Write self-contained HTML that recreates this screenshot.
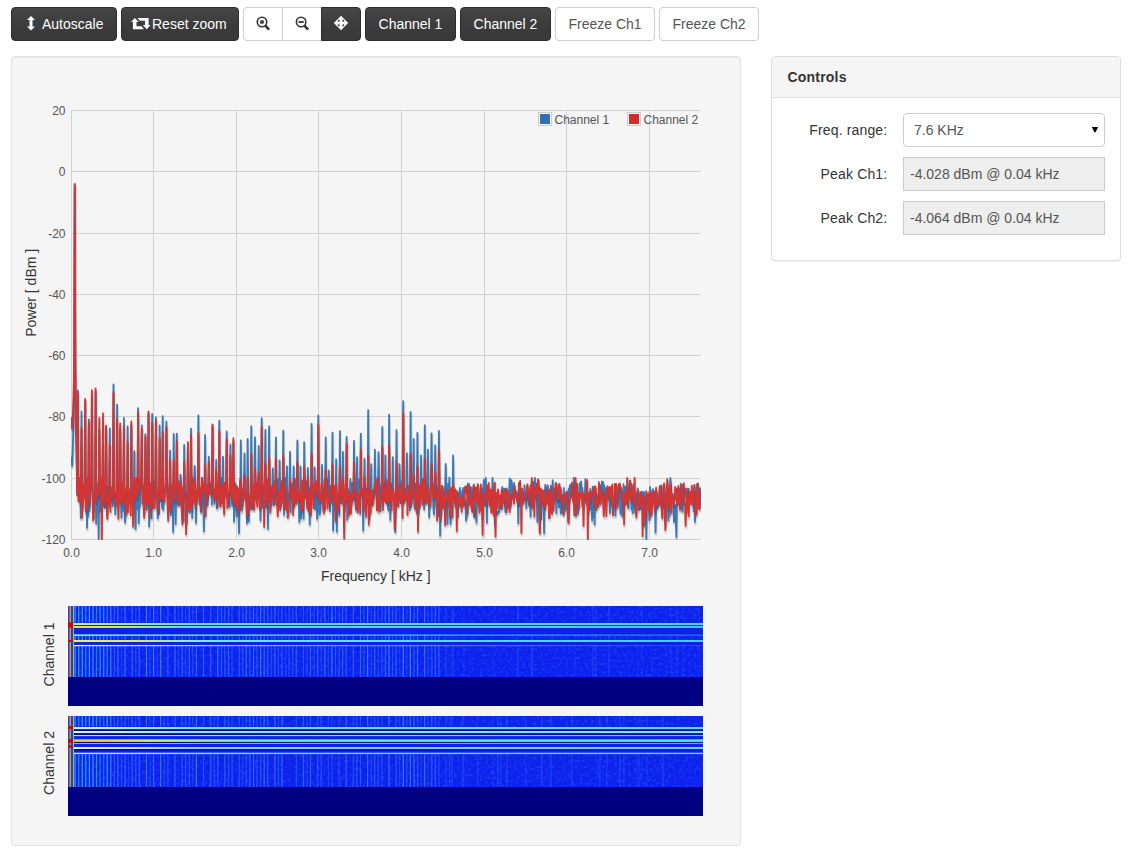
<!DOCTYPE html>
<html><head><meta charset="utf-8">
<style>
*{box-sizing:border-box;margin:0;padding:0}
html,body{width:1135px;height:852px;overflow:hidden;background:#fff}
body{font-family:"Liberation Sans",sans-serif;font-size:14px;color:#333;position:relative}
.btn{position:absolute;top:7px;height:34px;border:1px solid #ccc;border-radius:4px;background:#fff;color:#333;line-height:32px;text-align:center;white-space:nowrap}
.btn.dark{background:linear-gradient(to bottom,#464646 0%,#3c3c3c 50%,#393939 100%);border-color:#2c2c2c;color:#fff}
.btn.light{color:#555}
.well{position:absolute;left:11px;top:56px;width:730px;height:790px;background:#f5f5f5;border:1px solid #e1e1e1;border-radius:4px;box-shadow:inset 0 1px 1px rgba(0,0,0,.05)}
.panel{position:absolute;left:771px;top:56px;width:350px;height:205px;border:1px solid #ddd;border-radius:4px;background:#fff;box-shadow:0 1px 1px rgba(0,0,0,.05)}
.ph{height:41px;background:#f5f5f5;border-bottom:1px solid #ddd;border-radius:3px 3px 0 0;padding:10px 15px;font-weight:bold;line-height:20px;letter-spacing:0.2px;padding-left:15.5px}
.lab{position:absolute;right:232.7px;letter-spacing:0.15px;font-size:14px;color:#333;line-height:20px;text-align:right;white-space:nowrap}
.inp{position:absolute;left:131px;width:202px;height:34px;border:1px solid #ccc;background:#eee;color:#555;line-height:32px;padding-left:6px;white-space:nowrap}
.sel{background:#fff;border-radius:4px;padding-left:10px}
svg{position:absolute;left:0;top:0}
</style></head><body>

<div class="btn dark" style="left:11px;width:106px"><svg width="8" height="15" viewBox="0 0 8 15" style="position:absolute;left:15.2px;top:8px"><path d="M4 0 L8 4 L5.5 4 L5.5 10.5 L8 10.5 L4 14.5 L0 10.5 L2.5 10.5 L2.5 4 L0 4 Z" fill="#fff"/></svg><span style="position:absolute;left:30px;top:0">Autoscale</span></div>
<div class="btn dark" style="left:121px;width:118px"><svg width="20" height="12" viewBox="0 0 20 12" style="position:absolute;left:9px;top:10px"><path d="M3.8 0 L7.8 4 L5.5 4 L5.5 8.3 L10.5 8.3 L13 11.2 L1.9 11.2 L1.9 4 L0 4 Z" fill="#fff"/><path d="M6.5 0 L17.6 0 L17.6 7 L19.6 7 L15.8 11.2 L11.8 7 L14 7 L14 2.8 L9 2.8 Z" fill="#fff"/></svg><span style="position:absolute;left:30px;top:0">Reset zoom</span></div>
<div class="btn" style="left:243px;width:40px;border-radius:4px 0 0 4px"><svg width="20" height="20" viewBox="0 0 20 20" style="position:absolute;left:8px;top:5px"><circle cx="10.0" cy="9.0" r="4.7" fill="none" stroke="#333" stroke-width="1.6"/><circle cx="10.0" cy="9.0" r="2.1" fill="#444"/><path d="M13.4 12.6 L17.0 16.6" stroke="#333" stroke-width="2.5"/></svg></div>
<div class="btn" style="left:282px;width:40px;border-radius:0;border-right:none"><svg width="20" height="20" viewBox="0 0 20 20" style="position:absolute;left:8px;top:5px"><circle cx="10.1" cy="9.0" r="4.7" fill="none" stroke="#333" stroke-width="1.6"/><rect x="7.5" y="8.1" width="5.2" height="1.8" fill="#333"/><path d="M13.5 12.6 L17.1 16.6" stroke="#333" stroke-width="2.5"/></svg></div>
<div class="btn dark" style="left:321px;width:40px;border-radius:0 4px 4px 0"><svg width="16" height="16" viewBox="0 0 16 16" style="position:absolute;left:10.7px;top:7.3px"><path d="M8 0.8 L15.2 8 L8 15.2 L0.8 8 Z" fill="#fff"/><rect x="4.8" y="4.8" width="1.8" height="1.8" fill="#3a3a3a"/><rect x="9.4" y="4.8" width="1.8" height="1.8" fill="#3a3a3a"/><rect x="4.8" y="9.4" width="1.8" height="1.8" fill="#3a3a3a"/><rect x="9.4" y="9.4" width="1.8" height="1.8" fill="#3a3a3a"/></svg></div>
<div class="btn dark" style="left:365px;width:91px">Channel 1</div>
<div class="btn dark" style="left:460px;width:91px">Channel 2</div>
<div class="btn light" style="left:555px;width:100px">Freeze Ch1</div>
<div class="btn light" style="left:659px;width:100px">Freeze Ch2</div>
<div class="well"></div>
<div class="panel"><div class="ph">Controls</div>
<div class="lab" style="top:63px">Freq. range:</div>
<div class="inp sel" style="top:56px">7.6 KHz<svg width="8" height="8" viewBox="0 0 8 8" style="position:absolute;left:187px;top:12px"><path d="M0.8 1 L7.2 1 L4.6 6.3 L3.4 6.3 Z" fill="#000"/></svg></div>
<div class="lab" style="top:107px">Peak Ch1:</div>
<div class="inp" style="top:100px">-4.028 dBm @ 0.04 kHz</div>
<div class="lab" style="top:151px">Peak Ch2:</div>
<div class="inp" style="top:144px">-4.064 dBm @ 0.04 kHz</div>
</div>
<svg width="1135" height="852" viewBox="0 0 1135 852" style="position:absolute;left:0;top:0">
<defs><clipPath id="pc"><rect x="71" y="110" width="630" height="430"/></clipPath></defs>
<path d="M71 110.5H700.5 M71 171.5H700.5 M71 233.5H700.5 M71 294.5H700.5 M71 355.5H700.5 M71 416.5H700.5 M71 478.5H700.5 M71 539.5H700.5 M71.5 110V540 M153.5 110V540 M236.5 110V540 M318.5 110V540 M401.5 110V540 M484.5 110V540 M566.5 110V540 M649.5 110V540" stroke="#d2d2d2" stroke-width="1" fill="none"/>
<g font-family="Liberation Sans" font-size="12" fill="#545454">
<text x="65.5" y="115.0" text-anchor="end">20</text>
<text x="65.5" y="176.0" text-anchor="end">0</text>
<text x="65.5" y="238.0" text-anchor="end">-20</text>
<text x="65.5" y="299.0" text-anchor="end">-40</text>
<text x="65.5" y="360.0" text-anchor="end">-60</text>
<text x="65.5" y="421.0" text-anchor="end">-80</text>
<text x="65.5" y="483.0" text-anchor="end">-100</text>
<text x="65.5" y="544.0" text-anchor="end">-120</text>
<text x="71.5" y="557" text-anchor="middle">0.0</text>
<text x="153.5" y="557" text-anchor="middle">1.0</text>
<text x="236.5" y="557" text-anchor="middle">2.0</text>
<text x="318.5" y="557" text-anchor="middle">3.0</text>
<text x="401.5" y="557" text-anchor="middle">4.0</text>
<text x="484.5" y="557" text-anchor="middle">5.0</text>
<text x="566.5" y="557" text-anchor="middle">6.0</text>
<text x="649.5" y="557" text-anchor="middle">7.0</text>
</g>
<text x="375.8" y="581" font-family="Liberation Sans" font-size="14" fill="#333" text-anchor="middle">Frequency [ kHz ]</text>
<text transform="translate(36.4,292.8) rotate(-90)" x="0" y="0" font-family="Liberation Sans" font-size="14" fill="#333" text-anchor="middle">Power [ dBm ]</text>
<g clip-path="url(#pc)" fill="none" stroke-linejoin="round">
<path d="M71.4,459.1 L72.0,462.2 L72.6,468.3 L73.3,449.9 L73.9,425.4 L74.5,382.5 L75.1,186.5 L75.7,376.4 L76.3,431.5 L77.0,456.1 L77.6,497.3 L78.2,392.7 L78.8,493.6 L79.4,481.6 L80.0,499.7 L80.6,488.4 L81.3,520.3 L81.9,413.7 L82.5,496.9 L83.1,509.0 L83.7,492.5 L84.3,493.8 L85.0,491.0 L85.6,402.9 L86.2,509.0 L86.8,492.0 L87.4,530.2 L88.0,480.4 L88.6,518.9 L89.3,421.9 L89.9,513.1 L90.5,498.0 L91.1,480.1 L91.7,491.1 L92.3,397.3 L93.0,494.3 L93.6,511.7 L94.2,504.8 L94.8,493.7 L95.4,504.1 L96.0,393.5 L96.6,526.1 L97.3,484.5 L97.9,516.7 L98.5,500.5 L99.1,541.4 L99.7,431.9 L100.3,495.2 L100.9,514.1 L101.6,499.5 L102.2,485.4 L102.8,499.8 L103.4,428.9 L104.0,508.5 L104.6,496.5 L105.3,510.5 L105.9,497.5 L106.5,429.3 L107.1,508.0 L107.7,518.1 L108.3,489.6 L108.9,506.9 L109.6,494.8 L110.2,430.8 L110.8,505.3 L111.4,500.4 L112.0,501.0 L112.6,501.9 L113.3,508.4 L113.9,386.9 L114.5,505.7 L115.1,495.1 L115.7,516.5 L116.3,496.5 L116.9,495.7 L117.6,407.1 L118.2,501.2 L118.8,508.4 L119.4,497.2 L120.0,491.8 L120.6,431.6 L121.3,495.5 L121.9,520.0 L122.5,493.4 L123.1,509.1 L123.7,513.2 L124.3,420.4 L124.9,513.4 L125.6,524.9 L126.2,508.8 L126.8,492.3 L127.4,499.9 L128.0,428.7 L128.6,498.6 L129.3,503.9 L129.9,495.3 L130.5,499.9 L131.1,495.1 L131.7,427.5 L132.3,492.8 L132.9,499.9 L133.6,500.3 L134.2,506.9 L134.8,453.6 L135.4,511.4 L136.0,531.3 L136.6,486.3 L137.2,497.6 L137.9,511.4 L138.5,410.4 L139.1,525.7 L139.7,504.3 L140.3,509.7 L140.9,490.1 L141.6,480.1 L142.2,427.7 L142.8,486.3 L143.4,506.0 L144.0,492.8 L144.6,503.8 L145.2,493.5 L145.9,436.6 L146.5,493.1 L147.1,512.2 L147.7,495.0 L148.3,498.4 L148.9,416.0 L149.6,528.8 L150.2,485.0 L150.8,506.8 L151.4,497.1 L152.0,520.7 L152.6,416.3 L153.2,505.9 L153.9,483.9 L154.5,498.3 L155.1,492.1 L155.7,498.5 L156.3,419.7 L156.9,487.8 L157.6,507.7 L158.2,520.8 L158.8,508.7 L159.4,516.2 L160.0,427.6 L160.6,503.8 L161.2,496.3 L161.9,494.3 L162.5,510.2 L163.1,418.5 L163.7,512.4 L164.3,497.3 L164.9,495.4 L165.6,492.1 L166.2,480.1 L166.8,423.9 L167.4,482.7 L168.0,488.8 L168.6,500.8 L169.2,491.9 L169.9,511.6 L170.5,452.9 L171.1,517.5 L171.7,495.3 L172.3,507.1 L172.9,496.3 L173.6,534.2 L174.2,436.3 L174.8,507.2 L175.4,499.6 L176.0,526.3 L176.6,499.3 L177.2,436.0 L177.9,505.5 L178.5,502.2 L179.1,493.8 L179.7,494.6 L180.3,508.0 L180.9,477.0 L181.5,483.3 L182.2,501.6 L182.8,491.3 L183.4,490.3 L184.0,523.8 L184.6,447.4 L185.2,494.1 L185.9,495.3 L186.5,510.6 L187.1,525.2 L187.7,497.7 L188.3,452.3 L188.9,483.5 L189.5,513.9 L190.2,514.9 L190.8,499.6 L191.4,430.9 L192.0,496.9 L192.6,520.3 L193.2,500.3 L193.9,488.5 L194.5,483.8 L195.1,468.4 L195.7,482.6 L196.3,525.3 L196.9,503.9 L197.5,498.2 L198.2,496.7 L198.8,417.8 L199.4,492.6 L200.0,506.4 L200.6,495.7 L201.2,510.2 L201.9,514.2 L202.5,479.9 L203.1,501.8 L203.7,503.1 L204.3,533.6 L204.9,489.9 L205.5,437.3 L206.2,491.9 L206.8,504.6 L207.4,502.5 L208.0,508.0 L208.6,499.7 L209.2,459.1 L209.9,494.2 L210.5,496.5 L211.1,493.4 L211.7,484.2 L212.3,507.1 L212.9,426.8 L213.5,496.9 L214.2,493.8 L214.8,506.3 L215.4,491.6 L216.0,496.7 L216.6,462.3 L217.2,510.7 L217.8,510.3 L218.5,487.7 L219.1,499.0 L219.7,423.0 L220.3,501.3 L220.9,505.8 L221.5,480.1 L222.2,498.3 L222.8,490.5 L223.4,459.1 L224.0,509.2 L224.6,493.5 L225.2,499.0 L225.8,488.9 L226.5,492.7 L227.1,433.8 L227.7,500.8 L228.3,501.0 L228.9,500.2 L229.5,507.8 L230.2,509.2 L230.8,446.9 L231.4,496.1 L232.0,495.8 L232.6,508.3 L233.2,497.5 L233.8,443.5 L234.5,523.9 L235.1,484.7 L235.7,492.7 L236.3,501.7 L236.9,518.7 L237.5,488.9 L238.2,498.5 L238.8,513.5 L239.4,535.5 L240.0,496.8 L240.6,512.9 L241.2,442.9 L241.8,505.9 L242.5,507.6 L243.1,508.0 L243.7,490.0 L244.3,488.8 L244.9,455.7 L245.5,502.2 L246.2,494.0 L246.8,501.9 L247.4,525.8 L248.0,441.1 L248.6,486.0 L249.2,524.0 L249.8,498.3 L250.5,503.5 L251.1,511.6 L251.7,428.4 L252.3,498.9 L252.9,502.9 L253.5,511.4 L254.1,494.2 L254.8,482.8 L255.4,439.6 L256.0,497.4 L256.6,502.9 L257.2,492.9 L257.8,494.6 L258.5,501.0 L259.1,448.1 L259.7,500.4 L260.3,486.5 L260.9,522.8 L261.5,497.0 L262.1,420.5 L262.8,495.6 L263.4,510.4 L264.0,500.3 L264.6,511.1 L265.2,480.1 L265.8,432.2 L266.5,509.3 L267.1,490.1 L267.7,484.5 L268.3,531.1 L268.9,501.6 L269.5,428.8 L270.1,488.8 L270.8,488.8 L271.4,506.3 L272.0,492.6 L272.6,499.9 L273.2,470.7 L273.8,507.5 L274.5,507.5 L275.1,483.3 L275.7,498.5 L276.3,439.8 L276.9,507.3 L277.5,497.3 L278.1,495.2 L278.8,481.4 L279.4,501.0 L280.0,462.6 L280.6,492.1 L281.2,508.6 L281.8,489.0 L282.5,488.3 L283.1,500.2 L283.7,433.0 L284.3,517.1 L284.9,496.0 L285.5,480.1 L286.1,507.9 L286.8,491.9 L287.4,468.7 L288.0,519.7 L288.6,495.5 L289.2,500.0 L289.8,498.7 L290.4,454.1 L291.1,514.7 L291.7,486.7 L292.3,486.8 L292.9,488.6 L293.5,500.2 L294.1,468.7 L294.8,509.4 L295.4,486.3 L296.0,486.2 L296.6,480.7 L297.2,487.9 L297.8,442.7 L298.4,493.2 L299.1,499.0 L299.7,524.4 L300.3,516.2 L300.9,468.9 L301.5,520.7 L302.1,491.6 L302.8,486.1 L303.4,510.4 L304.0,521.1 L304.6,444.5 L305.2,491.2 L305.8,495.1 L306.4,483.4 L307.1,491.0 L307.7,500.6 L308.3,470.4 L308.9,492.8 L309.5,490.0 L310.1,526.8 L310.8,499.0 L311.4,489.4 L312.0,426.3 L312.6,498.2 L313.2,493.4 L313.8,489.4 L314.4,499.4 L315.1,469.9 L315.7,511.8 L316.3,499.0 L316.9,496.7 L317.5,521.1 L318.1,493.2 L318.8,417.8 L319.4,513.3 L320.0,517.3 L320.6,514.4 L321.2,506.1 L321.8,500.9 L322.4,467.3 L323.1,499.0 L323.7,505.2 L324.3,491.5 L324.9,504.2 L325.5,496.6 L326.1,439.8 L326.8,490.5 L327.4,494.6 L328.0,481.9 L328.6,494.7 L329.2,472.6 L329.8,491.9 L330.4,513.5 L331.1,497.2 L331.7,504.8 L332.3,491.2 L332.9,435.0 L333.5,532.8 L334.1,506.6 L334.7,507.0 L335.4,511.4 L336.0,506.1 L336.6,461.8 L337.2,534.1 L337.8,496.5 L338.4,505.2 L339.1,497.6 L339.7,518.0 L340.3,433.5 L340.9,505.4 L341.5,500.4 L342.1,493.9 L342.7,490.2 L343.4,454.2 L344.0,503.9 L344.6,491.9 L345.2,511.9 L345.8,504.0 L346.4,493.3 L347.1,439.2 L347.7,522.0 L348.3,495.4 L348.9,502.4 L349.5,510.4 L350.1,501.7 L350.7,481.4 L351.4,495.2 L352.0,507.3 L352.6,485.3 L353.2,501.5 L353.8,502.1 L354.4,443.3 L355.1,492.5 L355.7,505.4 L356.3,512.0 L356.9,489.8 L357.5,459.6 L358.1,514.6 L358.7,481.9 L359.4,487.7 L360.0,484.3 L360.6,494.1 L361.2,435.9 L361.8,494.7 L362.4,498.2 L363.1,500.4 L363.7,532.9 L364.3,497.3 L364.9,461.0 L365.5,497.1 L366.1,506.1 L366.7,490.7 L367.4,494.2 L368.0,505.8 L368.6,412.5 L369.2,491.1 L369.8,521.4 L370.4,504.4 L371.0,505.7 L371.7,466.6 L372.3,508.2 L372.9,492.7 L373.5,503.6 L374.1,498.3 L374.7,499.5 L375.4,452.0 L376.0,496.2 L376.6,488.9 L377.2,493.3 L377.8,488.9 L378.4,487.3 L379.0,454.4 L379.7,484.0 L380.3,494.0 L380.9,513.5 L381.5,492.8 L382.1,485.5 L382.7,429.2 L383.4,506.7 L384.0,487.6 L384.6,503.2 L385.2,500.8 L385.8,457.7 L386.4,503.9 L387.0,482.2 L387.7,503.4 L388.3,509.8 L388.9,513.1 L389.5,417.1 L390.1,485.7 L390.7,522.3 L391.4,486.3 L392.0,493.2 L392.6,500.9 L393.2,459.5 L393.8,499.5 L394.4,498.1 L395.0,499.8 L395.7,534.2 L396.3,506.2 L396.9,432.6 L397.5,497.2 L398.1,498.9 L398.7,508.8 L399.4,493.2 L400.0,466.6 L400.6,492.2 L401.2,493.6 L401.8,484.0 L402.4,488.9 L403.0,488.0 L403.7,403.5 L404.3,506.2 L404.9,500.5 L405.5,491.8 L406.1,496.0 L406.7,498.1 L407.3,455.5 L408.0,484.4 L408.6,496.8 L409.2,488.2 L409.8,500.7 L410.4,512.5 L411.0,414.2 L411.7,509.2 L412.3,503.4 L412.9,494.7 L413.5,481.3 L414.1,441.2 L414.7,501.8 L415.3,510.6 L416.0,485.7 L416.6,500.8 L417.2,515.9 L417.8,435.2 L418.4,492.4 L419.0,515.6 L419.7,498.4 L420.3,501.3 L420.9,490.0 L421.5,457.8 L422.1,496.2 L422.7,494.5 L423.3,498.7 L424.0,483.5 L424.6,511.7 L425.2,427.6 L425.8,484.8 L426.4,502.5 L427.0,503.4 L427.7,504.0 L428.3,452.0 L428.9,484.6 L429.5,519.6 L430.1,503.4 L430.7,508.5 L431.3,487.4 L432.0,435.6 L432.6,483.2 L433.2,485.8 L433.8,509.8 L434.4,516.9 L435.0,494.2 L435.7,447.7 L436.3,480.8 L436.9,510.3 L437.5,502.3 L438.1,489.2 L438.7,518.6 L439.3,433.2 L440.0,485.8 L440.6,538.1 L441.2,493.3 L441.8,516.5 L442.4,489.0 L443.0,503.6 L443.6,510.0 L444.3,496.7 L444.9,489.0 L445.5,497.3 L446.1,466.4 L446.7,487.8 L447.3,508.7 L448.0,526.5 L448.6,486.3 L449.2,494.3 L449.8,479.9 L450.4,515.8 L451.0,526.4 L451.6,499.0 L452.3,511.2 L452.9,504.4 L453.5,457.7 L454.1,492.4 L454.7,499.9 L455.3,503.4 L456.0,509.5 L456.6,505.7 L457.2,503.3 L457.8,519.8 L458.4,518.6 L459.0,496.1 L459.6,501.5 L460.3,490.4 L460.9,494.8 L461.5,509.3 L462.1,503.5 L462.7,496.4 L463.3,490.4 L464.0,502.4 L464.6,497.4 L465.2,506.1 L465.8,503.7 L466.4,523.0 L467.0,520.6 L467.6,509.3 L468.3,485.7 L468.9,498.4 L469.5,506.7 L470.1,506.6 L470.7,494.9 L471.3,489.4 L472.0,505.2 L472.6,514.4 L473.2,493.2 L473.8,490.6 L474.4,486.8 L475.0,510.0 L475.6,519.6 L476.3,509.6 L476.9,524.9 L477.5,493.6 L478.1,487.5 L478.7,492.4 L479.3,508.4 L480.0,501.4 L480.6,502.9 L481.2,505.2 L481.8,505.1 L482.4,491.4 L483.0,521.1 L483.6,490.0 L484.3,482.4 L484.9,506.0 L485.5,508.0 L486.1,480.1 L486.7,492.7 L487.3,525.1 L487.9,488.7 L488.6,502.1 L489.2,497.5 L489.8,500.7 L490.4,508.3 L491.0,504.4 L491.6,506.1 L492.3,510.9 L492.9,480.1 L493.5,492.9 L494.1,511.1 L494.7,504.0 L495.3,529.0 L495.9,506.6 L496.6,516.1 L497.2,517.3 L497.8,514.3 L498.4,516.3 L499.0,513.6 L499.6,514.5 L500.3,497.6 L500.9,503.0 L501.5,497.8 L502.1,511.6 L502.7,489.3 L503.3,495.4 L503.9,502.4 L504.6,491.0 L505.2,506.2 L505.8,514.4 L506.4,491.0 L507.0,490.8 L507.6,496.3 L508.3,510.3 L508.9,509.8 L509.5,496.9 L510.1,480.8 L510.7,502.5 L511.3,508.2 L511.9,482.6 L512.6,493.2 L513.2,498.9 L513.8,488.0 L514.4,485.4 L515.0,490.8 L515.6,496.0 L516.3,497.5 L516.9,493.7 L517.5,496.8 L518.1,497.9 L518.7,525.8 L519.3,493.8 L519.9,508.4 L520.6,506.9 L521.2,497.5 L521.8,504.2 L522.4,496.3 L523.0,505.0 L523.6,498.7 L524.2,498.6 L524.9,487.6 L525.5,499.0 L526.1,495.9 L526.7,510.5 L527.3,497.2 L527.9,503.1 L528.6,492.4 L529.2,506.5 L529.8,508.1 L530.4,501.8 L531.0,518.9 L531.6,490.2 L532.2,508.6 L532.9,489.1 L533.5,484.3 L534.1,503.7 L534.7,497.7 L535.3,480.1 L535.9,497.9 L536.6,497.7 L537.2,503.4 L537.8,524.2 L538.4,492.6 L539.0,507.5 L539.6,498.6 L540.2,534.2 L540.9,501.1 L541.5,521.8 L542.1,503.8 L542.7,498.2 L543.3,493.1 L543.9,505.5 L544.6,535.6 L545.2,493.3 L545.8,486.9 L546.4,490.0 L547.0,495.9 L547.6,503.8 L548.2,487.8 L548.9,494.6 L549.5,491.9 L550.1,506.1 L550.7,498.9 L551.3,490.0 L551.9,495.0 L552.6,505.9 L553.2,482.6 L553.8,502.5 L554.4,497.6 L555.0,491.4 L555.6,502.6 L556.2,485.4 L556.9,515.6 L557.5,494.7 L558.1,504.6 L558.7,491.9 L559.3,509.5 L559.9,486.4 L560.5,496.8 L561.2,515.8 L561.8,509.4 L562.4,497.2 L563.0,516.2 L563.6,514.0 L564.2,490.3 L564.9,505.4 L565.5,507.7 L566.1,513.0 L566.7,503.3 L567.3,494.5 L567.9,503.1 L568.5,524.0 L569.2,490.6 L569.8,499.0 L570.4,487.4 L571.0,488.7 L571.6,498.9 L572.2,491.2 L572.9,499.7 L573.5,494.6 L574.1,480.1 L574.7,503.6 L575.3,506.9 L575.9,484.4 L576.5,518.5 L577.2,497.4 L577.8,494.3 L578.4,497.2 L579.0,499.8 L579.6,510.9 L580.2,485.4 L580.9,490.1 L581.5,483.6 L582.1,495.8 L582.7,490.1 L583.3,497.3 L583.9,512.1 L584.5,498.0 L585.2,503.6 L585.8,481.2 L586.4,503.3 L587.0,494.5 L587.6,508.0 L588.2,494.7 L588.9,516.5 L589.5,503.6 L590.1,511.3 L590.7,491.1 L591.3,511.5 L591.9,499.6 L592.5,522.7 L593.2,489.1 L593.8,519.3 L594.4,499.9 L595.0,526.9 L595.6,494.9 L596.2,496.4 L596.8,496.3 L597.5,500.1 L598.1,505.3 L598.7,509.2 L599.3,489.2 L599.9,499.9 L600.5,506.3 L601.2,487.9 L601.8,487.4 L602.4,483.8 L603.0,502.3 L603.6,484.5 L604.2,502.6 L604.8,488.1 L605.5,502.0 L606.1,505.6 L606.7,490.5 L607.3,496.2 L607.9,492.9 L608.5,501.9 L609.2,498.5 L609.8,502.5 L610.4,515.6 L611.0,502.8 L611.6,503.0 L612.2,505.3 L612.8,509.8 L613.5,515.5 L614.1,501.8 L614.7,503.8 L615.3,497.5 L615.9,517.7 L616.5,490.9 L617.2,500.1 L617.8,503.2 L618.4,507.2 L619.0,490.6 L619.6,496.4 L620.2,489.3 L620.8,516.2 L621.5,494.3 L622.1,494.2 L622.7,518.8 L623.3,513.4 L623.9,486.6 L624.5,502.3 L625.2,497.1 L625.8,489.0 L626.4,495.1 L627.0,505.5 L627.6,500.2 L628.2,504.0 L628.8,510.7 L629.5,491.7 L630.1,482.8 L630.7,495.9 L631.3,485.8 L631.9,511.8 L632.5,499.5 L633.2,515.4 L633.8,497.2 L634.4,501.6 L635.0,508.4 L635.6,515.1 L636.2,515.4 L636.8,501.5 L637.5,495.7 L638.1,490.7 L638.7,496.8 L639.3,512.7 L639.9,501.7 L640.5,503.6 L641.1,511.6 L641.8,495.7 L642.4,494.0 L643.0,497.8 L643.6,494.4 L644.2,528.7 L644.8,494.4 L645.5,503.3 L646.1,501.2 L646.7,541.4 L647.3,508.9 L647.9,496.7 L648.5,503.1 L649.1,496.6 L649.8,522.6 L650.4,489.3 L651.0,510.7 L651.6,510.0 L652.2,503.9 L652.8,492.6 L653.5,491.4 L654.1,503.1 L654.7,505.3 L655.3,494.2 L655.9,534.9 L656.5,508.6 L657.1,493.8 L657.8,511.6 L658.4,505.6 L659.0,503.8 L659.6,506.3 L660.2,495.4 L660.8,506.9 L661.5,490.9 L662.1,487.9 L662.7,518.6 L663.3,499.0 L663.9,509.8 L664.5,495.0 L665.1,505.6 L665.8,526.3 L666.4,495.2 L667.0,496.2 L667.6,497.6 L668.2,494.9 L668.8,522.9 L669.5,498.2 L670.1,518.1 L670.7,480.1 L671.3,486.1 L671.9,501.0 L672.5,498.0 L673.1,496.4 L673.8,500.3 L674.4,524.4 L675.0,509.0 L675.6,507.5 L676.2,522.4 L676.8,539.4 L677.4,496.8 L678.1,507.4 L678.7,496.2 L679.3,496.7 L679.9,491.4 L680.5,511.9 L681.1,486.0 L681.8,511.0 L682.4,489.7 L683.0,513.9 L683.6,499.6 L684.2,507.2 L684.8,490.7 L685.4,494.6 L686.1,490.6 L686.7,500.7 L687.3,499.8 L687.9,511.7 L688.5,502.4 L689.1,490.9 L689.8,502.7 L690.4,498.4 L691.0,500.6 L691.6,495.3 L692.2,502.2 L692.8,493.1 L693.4,493.2 L694.1,513.5 L694.7,489.4 L695.3,524.2 L695.9,513.8 L696.5,498.3 L697.1,486.6 L697.8,491.2 L698.4,492.2 L699.0,501.7 L699.6,490.7 L700.2,510.4 L700.8,489.7" stroke="rgba(0,0,0,0.1)" stroke-width="3"/>
<path d="M71.3,458.4 L71.9,461.5 L72.5,467.6 L73.1,449.2 L73.7,424.7 L74.4,381.8 L75.0,185.8 L75.6,375.7 L76.2,430.8 L76.8,455.3 L77.4,496.5 L78.1,392.0 L78.7,492.8 L79.3,480.8 L79.9,498.9 L80.5,487.7 L81.1,519.6 L81.7,413.0 L82.4,496.1 L83.0,508.2 L83.6,491.8 L84.2,493.1 L84.8,490.3 L85.4,402.1 L86.1,508.3 L86.7,491.3 L87.3,529.4 L87.9,479.7 L88.5,518.1 L89.1,421.1 L89.7,512.4 L90.4,497.3 L91.0,479.4 L91.6,490.4 L92.2,396.6 L92.8,493.5 L93.4,511.0 L94.1,504.0 L94.7,493.0 L95.3,503.3 L95.9,392.8 L96.5,525.3 L97.1,483.8 L97.7,515.9 L98.4,499.7 L99.0,540.7 L99.6,431.2 L100.2,494.5 L100.8,513.4 L101.4,498.7 L102.0,484.6 L102.7,499.0 L103.3,428.2 L103.9,507.8 L104.5,495.8 L105.1,509.8 L105.7,496.7 L106.4,428.6 L107.0,507.2 L107.6,517.3 L108.2,488.9 L108.8,506.2 L109.4,494.1 L110.0,430.1 L110.7,504.6 L111.3,499.7 L111.9,500.3 L112.5,501.1 L113.1,507.7 L113.7,386.2 L114.4,504.9 L115.0,494.3 L115.6,515.7 L116.2,495.7 L116.8,495.0 L117.4,406.4 L118.0,500.5 L118.7,507.7 L119.3,496.5 L119.9,491.1 L120.5,430.8 L121.1,494.7 L121.7,519.3 L122.4,492.7 L123.0,508.3 L123.6,512.4 L124.2,419.6 L124.8,512.7 L125.4,524.2 L126.0,508.1 L126.7,491.6 L127.3,499.2 L127.9,428.0 L128.5,497.8 L129.1,503.1 L129.7,494.6 L130.4,499.1 L131.0,494.4 L131.6,426.8 L132.2,492.0 L132.8,499.1 L133.4,499.5 L134.0,506.2 L134.7,452.8 L135.3,510.7 L135.9,530.6 L136.5,485.6 L137.1,496.9 L137.7,510.7 L138.3,409.7 L139.0,524.9 L139.6,503.6 L140.2,509.0 L140.8,489.4 L141.4,479.4 L142.0,426.9 L142.7,485.6 L143.3,505.3 L143.9,492.0 L144.5,503.0 L145.1,492.8 L145.7,435.9 L146.3,492.4 L147.0,511.5 L147.6,494.3 L148.2,497.6 L148.8,415.3 L149.4,528.0 L150.0,484.2 L150.7,506.0 L151.3,496.3 L151.9,520.0 L152.5,415.6 L153.1,505.1 L153.7,483.2 L154.3,497.6 L155.0,491.4 L155.6,497.7 L156.2,418.9 L156.8,487.0 L157.4,507.0 L158.0,520.0 L158.7,508.0 L159.3,515.4 L159.9,426.9 L160.5,503.1 L161.1,495.6 L161.7,493.5 L162.3,509.4 L163.0,417.7 L163.6,511.6 L164.2,496.5 L164.8,494.6 L165.4,491.3 L166.0,479.4 L166.7,423.1 L167.3,482.0 L167.9,488.1 L168.5,500.1 L169.1,491.1 L169.7,510.9 L170.3,452.2 L171.0,516.8 L171.6,494.6 L172.2,506.3 L172.8,495.5 L173.4,533.5 L174.0,435.6 L174.7,506.5 L175.3,498.8 L175.9,525.6 L176.5,498.6 L177.1,435.2 L177.7,504.7 L178.3,501.4 L179.0,493.0 L179.6,493.9 L180.2,507.2 L180.8,476.3 L181.4,482.6 L182.0,500.8 L182.6,490.6 L183.3,489.6 L183.9,523.0 L184.5,446.6 L185.1,493.3 L185.7,494.5 L186.3,509.9 L187.0,524.5 L187.6,497.0 L188.2,451.5 L188.8,482.7 L189.4,513.2 L190.0,514.2 L190.6,498.9 L191.3,430.2 L191.9,496.1 L192.5,519.6 L193.1,499.6 L193.7,487.7 L194.3,483.0 L195.0,467.7 L195.6,481.9 L196.2,524.6 L196.8,503.2 L197.4,497.5 L198.0,496.0 L198.6,417.1 L199.3,491.9 L199.9,505.7 L200.5,495.0 L201.1,509.4 L201.7,513.5 L202.3,479.2 L203.0,501.1 L203.6,502.4 L204.2,532.8 L204.8,489.2 L205.4,436.6 L206.0,491.2 L206.6,503.9 L207.3,501.8 L207.9,507.3 L208.5,499.0 L209.1,458.4 L209.7,493.4 L210.3,495.7 L211.0,492.7 L211.6,483.5 L212.2,506.3 L212.8,426.0 L213.4,496.2 L214.0,493.0 L214.6,505.6 L215.3,490.9 L215.9,495.9 L216.5,461.5 L217.1,510.0 L217.7,509.6 L218.3,486.9 L218.9,498.2 L219.6,422.2 L220.2,500.6 L220.8,505.0 L221.4,479.4 L222.0,497.6 L222.6,489.8 L223.3,458.3 L223.9,508.5 L224.5,492.7 L225.1,498.3 L225.7,488.2 L226.3,492.0 L226.9,433.1 L227.6,500.0 L228.2,500.3 L228.8,499.5 L229.4,507.0 L230.0,508.5 L230.6,446.1 L231.3,495.4 L231.9,495.1 L232.5,507.6 L233.1,496.7 L233.7,442.7 L234.3,523.2 L234.9,484.0 L235.6,491.9 L236.2,501.0 L236.8,518.0 L237.4,488.1 L238.0,497.8 L238.6,512.8 L239.3,534.7 L239.9,496.1 L240.5,512.2 L241.1,442.1 L241.7,505.2 L242.3,506.9 L242.9,507.2 L243.6,489.3 L244.2,488.1 L244.8,455.0 L245.4,501.5 L246.0,493.2 L246.6,501.1 L247.3,525.1 L247.9,440.4 L248.5,485.2 L249.1,523.3 L249.7,497.6 L250.3,502.7 L250.9,510.8 L251.6,427.7 L252.2,498.2 L252.8,502.2 L253.4,510.7 L254.0,493.5 L254.6,482.1 L255.2,438.8 L255.9,496.6 L256.5,502.1 L257.1,492.1 L257.7,493.8 L258.3,500.3 L258.9,447.4 L259.6,499.7 L260.2,485.8 L260.8,522.1 L261.4,496.3 L262.0,419.8 L262.6,494.8 L263.2,509.6 L263.9,499.6 L264.5,510.3 L265.1,479.4 L265.7,431.5 L266.3,508.5 L266.9,489.4 L267.6,483.7 L268.2,530.4 L268.8,500.8 L269.4,428.1 L270.0,488.0 L270.6,488.1 L271.2,505.6 L271.9,491.9 L272.5,499.2 L273.1,470.0 L273.7,506.8 L274.3,506.8 L274.9,482.5 L275.6,497.8 L276.2,439.1 L276.8,506.5 L277.4,496.5 L278.0,494.4 L278.6,480.6 L279.2,500.3 L279.9,461.9 L280.5,491.3 L281.1,507.9 L281.7,488.3 L282.3,487.6 L282.9,499.5 L283.6,432.2 L284.2,516.4 L284.8,495.3 L285.4,479.4 L286.0,507.2 L286.6,491.1 L287.2,467.9 L287.9,518.9 L288.5,494.8 L289.1,499.2 L289.7,498.0 L290.3,453.4 L290.9,514.0 L291.5,486.0 L292.2,486.0 L292.8,487.8 L293.4,499.5 L294.0,468.0 L294.6,508.6 L295.2,485.6 L295.9,485.4 L296.5,480.0 L297.1,487.1 L297.7,442.0 L298.3,492.5 L298.9,498.2 L299.5,523.7 L300.2,515.5 L300.8,468.1 L301.4,519.9 L302.0,490.9 L302.6,485.4 L303.2,509.6 L303.9,520.3 L304.5,443.8 L305.1,490.5 L305.7,494.3 L306.3,482.6 L306.9,490.3 L307.5,499.8 L308.2,469.7 L308.8,492.1 L309.4,489.3 L310.0,526.1 L310.6,498.3 L311.2,488.6 L311.9,425.5 L312.5,497.4 L313.1,492.7 L313.7,488.6 L314.3,498.6 L314.9,469.1 L315.5,511.0 L316.2,498.3 L316.8,496.0 L317.4,520.4 L318.0,492.4 L318.6,417.0 L319.2,512.5 L319.9,516.5 L320.5,513.6 L321.1,505.3 L321.7,500.1 L322.3,466.6 L322.9,498.3 L323.5,504.5 L324.2,490.8 L324.8,503.5 L325.4,495.9 L326.0,439.1 L326.6,489.8 L327.2,493.8 L327.9,481.2 L328.5,494.0 L329.1,471.9 L329.7,491.2 L330.3,512.8 L330.9,496.4 L331.5,504.1 L332.2,490.5 L332.8,434.3 L333.4,532.1 L334.0,505.9 L334.6,506.2 L335.2,510.7 L335.8,505.3 L336.5,461.0 L337.1,533.3 L337.7,495.8 L338.3,504.4 L338.9,496.8 L339.5,517.3 L340.2,432.7 L340.8,504.6 L341.4,499.6 L342.0,493.2 L342.6,489.5 L343.2,453.5 L343.8,503.2 L344.5,491.2 L345.1,511.2 L345.7,503.3 L346.3,492.6 L346.9,438.4 L347.5,521.3 L348.2,494.6 L348.8,501.7 L349.4,509.7 L350.0,501.0 L350.6,480.7 L351.2,494.4 L351.8,506.6 L352.5,484.6 L353.1,500.7 L353.7,501.4 L354.3,442.6 L354.9,491.7 L355.5,504.7 L356.2,511.3 L356.8,489.1 L357.4,458.9 L358.0,513.9 L358.6,481.2 L359.2,487.0 L359.8,483.6 L360.5,493.3 L361.1,435.2 L361.7,494.0 L362.3,497.5 L362.9,499.7 L363.5,532.2 L364.2,496.6 L364.8,460.2 L365.4,496.4 L366.0,505.3 L366.6,490.0 L367.2,493.5 L367.8,505.0 L368.5,411.8 L369.1,490.4 L369.7,520.7 L370.3,503.7 L370.9,505.0 L371.5,465.9 L372.1,507.4 L372.8,491.9 L373.4,502.9 L374.0,497.5 L374.6,498.8 L375.2,451.2 L375.8,495.5 L376.5,488.2 L377.1,492.6 L377.7,488.2 L378.3,486.6 L378.9,453.7 L379.5,483.2 L380.1,493.3 L380.8,512.7 L381.4,492.0 L382.0,484.8 L382.6,428.4 L383.2,505.9 L383.8,486.8 L384.5,502.5 L385.1,500.0 L385.7,457.0 L386.3,503.2 L386.9,481.4 L387.5,502.6 L388.1,509.1 L388.8,512.3 L389.4,416.3 L390.0,485.0 L390.6,521.5 L391.2,485.6 L391.8,492.4 L392.5,500.2 L393.1,458.8 L393.7,498.7 L394.3,497.3 L394.9,499.1 L395.5,533.5 L396.1,505.5 L396.8,431.9 L397.4,496.4 L398.0,498.2 L398.6,508.0 L399.2,492.4 L399.8,465.8 L400.5,491.5 L401.1,492.9 L401.7,483.2 L402.3,488.2 L402.9,487.2 L403.5,402.8 L404.1,505.5 L404.8,499.7 L405.4,491.0 L406.0,495.2 L406.6,497.4 L407.2,454.8 L407.8,483.7 L408.4,496.1 L409.1,487.5 L409.7,499.9 L410.3,511.8 L410.9,413.5 L411.5,508.5 L412.1,502.6 L412.8,494.0 L413.4,480.5 L414.0,440.4 L414.6,501.0 L415.2,509.9 L415.8,485.0 L416.4,500.1 L417.1,515.1 L417.7,434.4 L418.3,491.6 L418.9,514.9 L419.5,497.7 L420.1,500.6 L420.8,489.3 L421.4,457.1 L422.0,495.5 L422.6,493.8 L423.2,498.0 L423.8,482.8 L424.4,511.0 L425.1,426.9 L425.7,484.1 L426.3,501.8 L426.9,502.6 L427.5,503.2 L428.1,451.3 L428.8,483.8 L429.4,518.9 L430.0,502.7 L430.6,507.8 L431.2,486.7 L431.8,434.9 L432.4,482.5 L433.1,485.1 L433.7,509.0 L434.3,516.1 L434.9,493.5 L435.5,447.0 L436.1,480.0 L436.8,509.5 L437.4,501.6 L438.0,488.5 L438.6,517.9 L439.2,432.5 L439.8,485.0 L440.4,537.3 L441.1,492.5 L441.7,515.8 L442.3,488.2 L442.9,502.8 L443.5,509.3 L444.1,496.0 L444.7,488.3 L445.4,496.5 L446.0,465.6 L446.6,487.1 L447.2,508.0 L447.8,525.8 L448.4,485.6 L449.1,493.5 L449.7,479.1 L450.3,515.1 L450.9,525.7 L451.5,498.2 L452.1,510.5 L452.7,503.7 L453.4,457.0 L454.0,491.7 L454.6,499.2 L455.2,502.7 L455.8,508.7 L456.4,504.9 L457.1,502.6 L457.7,519.0 L458.3,517.8 L458.9,495.3 L459.5,500.8 L460.1,489.6 L460.7,494.0 L461.4,508.5 L462.0,502.8 L462.6,495.7 L463.2,489.7 L463.8,501.7 L464.4,496.6 L465.1,505.3 L465.7,503.0 L466.3,522.2 L466.9,519.9 L467.5,508.6 L468.1,484.9 L468.7,497.6 L469.4,506.0 L470.0,505.9 L470.6,494.2 L471.2,488.7 L471.8,504.5 L472.4,513.6 L473.1,492.5 L473.7,489.9 L474.3,486.1 L474.9,509.3 L475.5,518.9 L476.1,508.8 L476.7,524.2 L477.4,492.8 L478.0,486.7 L478.6,491.6 L479.2,507.7 L479.8,500.7 L480.4,502.2 L481.1,504.5 L481.7,504.4 L482.3,490.7 L482.9,520.4 L483.5,489.2 L484.1,481.6 L484.7,505.3 L485.4,507.3 L486.0,479.4 L486.6,492.0 L487.2,524.4 L487.8,487.9 L488.4,501.3 L489.0,496.7 L489.7,499.9 L490.3,507.5 L490.9,503.7 L491.5,505.3 L492.1,510.2 L492.7,479.4 L493.4,492.1 L494.0,510.4 L494.6,503.2 L495.2,528.3 L495.8,505.8 L496.4,515.4 L497.0,516.5 L497.7,513.6 L498.3,515.6 L498.9,512.8 L499.5,513.7 L500.1,496.8 L500.7,502.2 L501.4,497.0 L502.0,510.9 L502.6,488.6 L503.2,494.7 L503.8,501.7 L504.4,490.3 L505.0,505.5 L505.7,513.7 L506.3,490.3 L506.9,490.1 L507.5,495.6 L508.1,509.6 L508.7,509.1 L509.4,496.2 L510.0,480.1 L510.6,501.7 L511.2,507.5 L511.8,481.9 L512.4,492.4 L513.0,498.2 L513.7,487.3 L514.3,484.6 L514.9,490.1 L515.5,495.3 L516.1,496.7 L516.7,492.9 L517.4,496.1 L518.0,497.2 L518.6,525.1 L519.2,493.1 L519.8,507.7 L520.4,506.2 L521.0,496.7 L521.7,503.5 L522.3,495.6 L522.9,504.3 L523.5,497.9 L524.1,497.9 L524.7,486.9 L525.3,498.2 L526.0,495.2 L526.6,509.7 L527.2,496.5 L527.8,502.4 L528.4,491.7 L529.0,505.8 L529.7,507.3 L530.3,501.1 L530.9,518.2 L531.5,489.4 L532.1,507.8 L532.7,488.4 L533.3,483.5 L534.0,502.9 L534.6,497.0 L535.2,479.4 L535.8,497.2 L536.4,497.0 L537.0,502.7 L537.7,523.5 L538.3,491.8 L538.9,506.8 L539.5,497.9 L540.1,533.4 L540.7,500.4 L541.3,521.1 L542.0,503.1 L542.6,497.5 L543.2,492.4 L543.8,504.7 L544.4,534.9 L545.0,492.6 L545.7,486.2 L546.3,489.3 L546.9,495.2 L547.5,503.1 L548.1,487.0 L548.7,493.9 L549.3,491.2 L550.0,505.4 L550.6,498.2 L551.2,489.2 L551.8,494.3 L552.4,505.1 L553.0,481.8 L553.7,501.7 L554.3,496.8 L554.9,490.7 L555.5,501.9 L556.1,484.6 L556.7,514.9 L557.3,494.0 L558.0,503.9 L558.6,491.1 L559.2,508.8 L559.8,485.7 L560.4,496.1 L561.0,515.1 L561.6,508.7 L562.3,496.4 L562.9,515.5 L563.5,513.2 L564.1,489.6 L564.7,504.6 L565.3,507.0 L566.0,512.3 L566.6,502.5 L567.2,493.8 L567.8,502.4 L568.4,523.2 L569.0,489.9 L569.6,498.3 L570.3,486.6 L570.9,488.0 L571.5,498.2 L572.1,490.5 L572.7,499.0 L573.3,493.9 L574.0,479.4 L574.6,502.8 L575.2,506.2 L575.8,483.7 L576.4,517.8 L577.0,496.7 L577.6,493.6 L578.3,496.4 L578.9,499.1 L579.5,510.2 L580.1,484.7 L580.7,489.3 L581.3,482.9 L582.0,495.1 L582.6,489.3 L583.2,496.5 L583.8,511.4 L584.4,497.3 L585.0,502.9 L585.6,480.5 L586.3,502.5 L586.9,493.8 L587.5,507.2 L588.1,494.0 L588.7,515.8 L589.3,502.8 L590.0,510.5 L590.6,490.4 L591.2,510.8 L591.8,498.9 L592.4,522.0 L593.0,488.4 L593.6,518.6 L594.3,499.2 L594.9,526.1 L595.5,494.2 L596.1,495.6 L596.7,495.6 L597.3,499.3 L597.9,504.5 L598.6,508.5 L599.2,488.5 L599.8,499.1 L600.4,505.6 L601.0,487.1 L601.6,486.7 L602.3,483.0 L602.9,501.6 L603.5,483.8 L604.1,501.9 L604.7,487.3 L605.3,501.2 L605.9,504.8 L606.6,489.8 L607.2,495.5 L607.8,492.2 L608.4,501.1 L609.0,497.8 L609.6,501.8 L610.3,514.8 L610.9,502.1 L611.5,502.3 L612.1,504.6 L612.7,509.0 L613.3,514.8 L613.9,501.0 L614.6,503.1 L615.2,496.8 L615.8,517.0 L616.4,490.1 L617.0,499.4 L617.6,502.4 L618.3,506.4 L618.9,489.8 L619.5,495.6 L620.1,488.6 L620.7,515.5 L621.3,493.6 L621.9,493.5 L622.6,518.1 L623.2,512.6 L623.8,485.8 L624.4,501.6 L625.0,496.3 L625.6,488.3 L626.3,494.4 L626.9,504.7 L627.5,499.5 L628.1,503.3 L628.7,510.0 L629.3,490.9 L629.9,482.1 L630.6,495.1 L631.2,485.1 L631.8,511.1 L632.4,498.8 L633.0,514.7 L633.6,496.5 L634.3,500.9 L634.9,507.7 L635.5,514.4 L636.1,514.7 L636.7,500.8 L637.3,495.0 L637.9,490.0 L638.6,496.1 L639.2,512.0 L639.8,501.0 L640.4,502.9 L641.0,510.9 L641.6,495.0 L642.2,493.3 L642.9,497.0 L643.5,493.7 L644.1,528.0 L644.7,493.7 L645.3,502.5 L645.9,500.5 L646.6,540.7 L647.2,508.2 L647.8,496.0 L648.4,502.4 L649.0,495.9 L649.6,521.9 L650.2,488.5 L650.9,510.0 L651.5,509.3 L652.1,503.1 L652.7,491.8 L653.3,490.7 L653.9,502.3 L654.6,504.5 L655.2,493.5 L655.8,534.2 L656.4,507.8 L657.0,493.1 L657.6,510.9 L658.2,504.8 L658.9,503.1 L659.5,505.6 L660.1,494.6 L660.7,506.1 L661.3,490.2 L661.9,487.2 L662.6,517.8 L663.2,498.3 L663.8,509.0 L664.4,494.3 L665.0,504.8 L665.6,525.6 L666.2,494.5 L666.9,495.4 L667.5,496.9 L668.1,494.2 L668.7,522.2 L669.3,497.4 L669.9,517.3 L670.6,479.4 L671.2,485.3 L671.8,500.3 L672.4,497.2 L673.0,495.7 L673.6,499.5 L674.2,523.6 L674.9,508.2 L675.5,506.8 L676.1,521.6 L676.7,538.7 L677.3,496.1 L677.9,506.7 L678.5,495.5 L679.2,496.0 L679.8,490.7 L680.4,511.2 L681.0,485.3 L681.6,510.2 L682.2,489.0 L682.9,513.2 L683.5,498.9 L684.1,506.4 L684.7,489.9 L685.3,493.8 L685.9,489.9 L686.5,500.0 L687.2,499.1 L687.8,511.0 L688.4,501.7 L689.0,490.2 L689.6,501.9 L690.2,497.6 L690.9,499.8 L691.5,494.6 L692.1,501.5 L692.7,492.4 L693.3,492.4 L693.9,512.8 L694.5,488.7 L695.2,523.5 L695.8,513.1 L696.4,497.5 L697.0,485.9 L697.6,490.5 L698.2,491.4 L698.9,501.0 L699.5,489.9 L700.1,509.7 L700.7,489.0" stroke="rgba(0,0,0,0.1)" stroke-width="1.5"/>
<path d="M71.0,456.8 L71.6,459.8 L72.2,466.0 L72.8,447.6 L73.5,423.1 L74.1,380.2 L74.7,184.1 L75.3,374.0 L75.9,429.2 L76.5,453.7 L77.2,494.9 L77.8,390.4 L78.4,491.2 L79.0,479.2 L79.6,497.3 L80.2,486.0 L80.8,518.0 L81.5,411.4 L82.1,494.5 L82.7,506.6 L83.3,490.2 L83.9,491.5 L84.5,488.7 L85.2,400.5 L85.8,506.6 L86.4,489.7 L87.0,527.8 L87.6,478.0 L88.2,516.5 L88.8,419.5 L89.5,510.8 L90.1,495.7 L90.7,477.8 L91.3,488.8 L91.9,395.0 L92.5,491.9 L93.1,509.4 L93.8,502.4 L94.4,491.4 L95.0,501.7 L95.6,391.1 L96.2,523.7 L96.8,482.2 L97.5,514.3 L98.1,498.1 L98.7,539.1 L99.3,429.6 L99.9,492.9 L100.5,511.7 L101.1,497.1 L101.8,483.0 L102.4,497.4 L103.0,426.6 L103.6,506.2 L104.2,494.2 L104.8,508.2 L105.5,495.1 L106.1,426.9 L106.7,505.6 L107.3,515.7 L107.9,487.3 L108.5,504.6 L109.1,492.5 L109.8,428.5 L110.4,503.0 L111.0,498.1 L111.6,498.7 L112.2,499.5 L112.8,506.1 L113.5,384.5 L114.1,503.3 L114.7,492.7 L115.3,514.1 L115.9,494.1 L116.5,493.4 L117.1,404.7 L117.8,498.9 L118.4,506.0 L119.0,494.9 L119.6,489.4 L120.2,429.2 L120.8,493.1 L121.5,517.7 L122.1,491.1 L122.7,506.7 L123.3,510.8 L123.9,418.0 L124.5,511.1 L125.1,522.6 L125.8,506.4 L126.4,489.9 L127.0,497.5 L127.6,426.3 L128.2,496.2 L128.8,501.5 L129.4,492.9 L130.1,497.5 L130.7,492.7 L131.3,425.2 L131.9,490.4 L132.5,497.5 L133.1,497.9 L133.8,504.6 L134.4,451.2 L135.0,509.1 L135.6,528.9 L136.2,484.0 L136.8,495.3 L137.4,509.1 L138.1,408.1 L138.7,523.3 L139.3,501.9 L139.9,507.3 L140.5,487.8 L141.1,477.8 L141.8,425.3 L142.4,484.0 L143.0,503.7 L143.6,490.4 L144.2,501.4 L144.8,491.2 L145.4,434.2 L146.1,490.8 L146.7,509.9 L147.3,492.7 L147.9,496.0 L148.5,413.6 L149.1,526.4 L149.8,482.6 L150.4,504.4 L151.0,494.7 L151.6,518.4 L152.2,413.9 L152.8,503.5 L153.4,481.5 L154.1,496.0 L154.7,489.7 L155.3,496.1 L155.9,417.3 L156.5,485.4 L157.1,505.3 L157.8,518.4 L158.4,506.4 L159.0,513.8 L159.6,425.3 L160.2,501.5 L160.8,494.0 L161.4,491.9 L162.1,507.8 L162.7,416.1 L163.3,510.0 L163.9,494.9 L164.5,493.0 L165.1,489.7 L165.8,477.8 L166.4,421.5 L167.0,480.4 L167.6,486.4 L168.2,498.5 L168.8,489.5 L169.4,509.2 L170.1,450.6 L170.7,515.2 L171.3,493.0 L171.9,504.7 L172.5,493.9 L173.1,531.9 L173.7,434.0 L174.4,504.9 L175.0,497.2 L175.6,524.0 L176.2,496.9 L176.8,433.6 L177.4,503.1 L178.1,499.8 L178.7,491.4 L179.3,492.3 L179.9,505.6 L180.5,474.7 L181.1,481.0 L181.7,499.2 L182.4,488.9 L183.0,487.9 L183.6,521.4 L184.2,445.0 L184.8,491.7 L185.4,492.9 L186.1,508.2 L186.7,522.9 L187.3,495.4 L187.9,449.9 L188.5,481.1 L189.1,511.6 L189.7,512.5 L190.4,497.3 L191.0,428.6 L191.6,494.5 L192.2,517.9 L192.8,497.9 L193.4,486.1 L194.1,481.4 L194.7,466.0 L195.3,480.2 L195.9,522.9 L196.5,501.6 L197.1,495.8 L197.7,494.4 L198.4,415.5 L199.0,490.3 L199.6,504.1 L200.2,493.4 L200.8,507.8 L201.4,511.8 L202.1,477.6 L202.7,499.5 L203.3,500.8 L203.9,531.2 L204.5,487.5 L205.1,435.0 L205.7,489.6 L206.4,502.2 L207.0,500.1 L207.6,505.7 L208.2,497.4 L208.8,456.7 L209.4,491.8 L210.0,494.1 L210.7,491.1 L211.3,481.8 L211.9,504.7 L212.5,424.4 L213.1,494.5 L213.7,491.4 L214.4,503.9 L215.0,489.2 L215.6,494.3 L216.2,459.9 L216.8,508.4 L217.4,507.9 L218.0,485.3 L218.7,496.6 L219.3,420.6 L219.9,499.0 L220.5,503.4 L221.1,477.8 L221.7,496.0 L222.4,488.1 L223.0,456.7 L223.6,506.8 L224.2,491.1 L224.8,496.6 L225.4,486.6 L226.0,490.3 L226.7,431.5 L227.3,498.4 L227.9,498.7 L228.5,497.9 L229.1,505.4 L229.7,506.8 L230.4,444.5 L231.0,493.7 L231.6,493.5 L232.2,505.9 L232.8,495.1 L233.4,441.1 L234.0,521.6 L234.7,482.4 L235.3,490.3 L235.9,499.3 L236.5,516.3 L237.1,486.5 L237.7,496.1 L238.4,511.2 L239.0,533.1 L239.6,494.5 L240.2,510.5 L240.8,440.5 L241.4,503.5 L242.0,505.3 L242.7,505.6 L243.3,487.7 L243.9,486.4 L244.5,453.3 L245.1,499.8 L245.7,491.6 L246.3,499.5 L247.0,523.5 L247.6,438.8 L248.2,483.6 L248.8,521.7 L249.4,496.0 L250.0,501.1 L250.7,509.2 L251.3,426.1 L251.9,496.5 L252.5,500.5 L253.1,509.1 L253.7,491.9 L254.3,480.5 L255.0,437.2 L255.6,495.0 L256.2,500.5 L256.8,490.5 L257.4,492.2 L258.0,498.7 L258.7,445.8 L259.3,498.1 L259.9,484.2 L260.5,520.4 L261.1,494.7 L261.7,418.2 L262.3,493.2 L263.0,508.0 L263.6,498.0 L264.2,508.7 L264.8,477.8 L265.4,429.9 L266.0,506.9 L266.7,487.8 L267.3,482.1 L267.9,528.8 L268.5,499.2 L269.1,426.5 L269.7,486.4 L270.3,486.5 L271.0,503.9 L271.6,490.3 L272.2,497.6 L272.8,468.4 L273.4,505.1 L274.0,505.2 L274.7,480.9 L275.3,496.2 L275.9,437.5 L276.5,504.9 L277.1,494.9 L277.7,492.8 L278.3,479.0 L279.0,498.6 L279.6,460.3 L280.2,489.7 L280.8,506.3 L281.4,486.6 L282.0,485.9 L282.6,497.9 L283.3,430.6 L283.9,514.8 L284.5,493.7 L285.1,477.8 L285.7,505.5 L286.3,489.5 L287.0,466.3 L287.6,517.3 L288.2,493.1 L288.8,497.6 L289.4,496.4 L290.0,451.7 L290.6,512.3 L291.3,484.4 L291.9,484.4 L292.5,486.2 L293.1,497.8 L293.7,466.4 L294.3,507.0 L295.0,483.9 L295.6,483.8 L296.2,478.3 L296.8,485.5 L297.4,440.3 L298.0,490.9 L298.6,496.6 L299.3,522.1 L299.9,513.8 L300.5,466.5 L301.1,518.3 L301.7,489.3 L302.3,483.7 L303.0,508.0 L303.6,518.7 L304.2,442.2 L304.8,488.9 L305.4,492.7 L306.0,481.0 L306.6,488.7 L307.3,498.2 L307.9,468.0 L308.5,490.4 L309.1,487.6 L309.7,524.5 L310.3,496.7 L311.0,487.0 L311.6,423.9 L312.2,495.8 L312.8,491.0 L313.4,487.0 L314.0,497.0 L314.6,467.5 L315.3,509.4 L315.9,496.7 L316.5,494.4 L317.1,518.7 L317.7,490.8 L318.3,415.4 L319.0,510.9 L319.6,514.9 L320.2,512.0 L320.8,503.7 L321.4,498.5 L322.0,464.9 L322.6,496.7 L323.3,502.8 L323.9,489.2 L324.5,501.9 L325.1,494.2 L325.7,437.4 L326.3,488.2 L326.9,492.2 L327.6,479.6 L328.2,492.4 L328.8,470.3 L329.4,489.5 L330.0,511.2 L330.6,494.8 L331.3,502.5 L331.9,488.9 L332.5,432.7 L333.1,530.5 L333.7,504.3 L334.3,504.6 L334.9,509.1 L335.6,503.7 L336.2,459.4 L336.8,531.7 L337.4,494.1 L338.0,502.8 L338.6,495.2 L339.3,515.7 L339.9,431.1 L340.5,503.0 L341.1,498.0 L341.7,491.6 L342.3,487.9 L342.9,451.8 L343.6,501.5 L344.2,489.6 L344.8,509.5 L345.4,501.7 L346.0,491.0 L346.6,436.8 L347.3,519.7 L347.9,493.0 L348.5,500.1 L349.1,508.1 L349.7,499.3 L350.3,479.1 L350.9,492.8 L351.6,504.9 L352.2,483.0 L352.8,499.1 L353.4,499.8 L354.0,441.0 L354.6,490.1 L355.3,503.1 L355.9,509.6 L356.5,487.5 L357.1,457.2 L357.7,512.3 L358.3,479.5 L358.9,485.4 L359.6,482.0 L360.2,491.7 L360.8,433.6 L361.4,492.4 L362.0,495.8 L362.6,498.0 L363.2,530.6 L363.9,494.9 L364.5,458.6 L365.1,494.7 L365.7,503.7 L366.3,488.4 L366.9,491.8 L367.6,503.4 L368.2,410.2 L368.8,488.7 L369.4,519.0 L370.0,502.1 L370.6,503.3 L371.2,464.2 L371.9,505.8 L372.5,490.3 L373.1,501.2 L373.7,495.9 L374.3,497.2 L374.9,449.6 L375.6,493.9 L376.2,486.6 L376.8,491.0 L377.4,486.5 L378.0,484.9 L378.6,452.1 L379.2,481.6 L379.9,491.6 L380.5,511.1 L381.1,490.4 L381.7,483.2 L382.3,426.8 L382.9,504.3 L383.6,485.2 L384.2,500.9 L384.8,498.4 L385.4,455.4 L386.0,501.5 L386.6,479.8 L387.2,501.0 L387.9,507.5 L388.5,510.7 L389.1,414.7 L389.7,483.3 L390.3,519.9 L390.9,483.9 L391.6,490.8 L392.2,498.6 L392.8,457.2 L393.4,497.1 L394.0,495.7 L394.6,497.5 L395.2,531.9 L395.9,503.9 L396.5,430.2 L397.1,494.8 L397.7,496.6 L398.3,506.4 L398.9,490.8 L399.5,464.2 L400.2,489.8 L400.8,491.3 L401.4,481.6 L402.0,486.5 L402.6,485.6 L403.2,401.1 L403.9,503.8 L404.5,498.1 L405.1,489.4 L405.7,493.6 L406.3,495.8 L406.9,453.2 L407.5,482.0 L408.2,494.5 L408.8,485.9 L409.4,498.3 L410.0,510.2 L410.6,411.9 L411.2,506.9 L411.9,501.0 L412.5,492.4 L413.1,478.9 L413.7,438.8 L414.3,499.4 L414.9,508.3 L415.5,483.4 L416.2,498.5 L416.8,513.5 L417.4,432.8 L418.0,490.0 L418.6,513.3 L419.2,496.1 L419.9,499.0 L420.5,487.6 L421.1,455.5 L421.7,493.8 L422.3,492.2 L422.9,496.4 L423.5,481.1 L424.2,509.4 L424.8,425.2 L425.4,482.5 L426.0,500.2 L426.6,501.0 L427.2,501.6 L427.9,449.6 L428.5,482.2 L429.1,517.3 L429.7,501.1 L430.3,506.1 L430.9,485.0 L431.5,433.3 L432.2,480.8 L432.8,483.5 L433.4,507.4 L434.0,514.5 L434.6,491.9 L435.2,445.3 L435.8,478.4 L436.5,507.9 L437.1,499.9 L437.7,486.8 L438.3,516.2 L438.9,430.8 L439.5,483.4 L440.2,535.7 L440.8,490.9 L441.4,514.1 L442.0,486.6 L442.6,501.2 L443.2,507.7 L443.8,494.3 L444.5,486.7 L445.1,494.9 L445.7,464.0 L446.3,485.4 L446.9,506.3 L447.5,524.1 L448.2,484.0 L448.8,491.9 L449.4,477.5 L450.0,513.4 L450.6,524.0 L451.2,496.6 L451.8,508.8 L452.5,502.1 L453.1,455.3 L453.7,490.0 L454.3,497.6 L454.9,501.0 L455.5,507.1 L456.2,503.3 L456.8,500.9 L457.4,517.4 L458.0,516.2 L458.6,493.7 L459.2,499.2 L459.8,488.0 L460.5,492.4 L461.1,506.9 L461.7,501.2 L462.3,494.1 L462.9,488.0 L463.5,500.1 L464.2,495.0 L464.8,503.7 L465.4,501.3 L466.0,520.6 L466.6,518.3 L467.2,507.0 L467.8,483.3 L468.5,496.0 L469.1,504.4 L469.7,504.3 L470.3,492.5 L470.9,487.1 L471.5,502.8 L472.2,512.0 L472.8,490.9 L473.4,488.2 L474.0,484.5 L474.6,507.7 L475.2,517.3 L475.8,507.2 L476.5,522.6 L477.1,491.2 L477.7,485.1 L478.3,490.0 L478.9,506.1 L479.5,499.1 L480.1,500.6 L480.8,502.9 L481.4,502.7 L482.0,489.1 L482.6,518.8 L483.2,487.6 L483.8,480.0 L484.5,503.6 L485.1,505.6 L485.7,477.8 L486.3,490.4 L486.9,522.8 L487.5,486.3 L488.1,499.7 L488.8,495.1 L489.4,498.3 L490.0,505.9 L490.6,502.1 L491.2,503.7 L491.8,508.6 L492.5,477.8 L493.1,490.5 L493.7,508.8 L494.3,501.6 L494.9,526.6 L495.5,504.2 L496.1,513.7 L496.8,514.9 L497.4,511.9 L498.0,513.9 L498.6,511.2 L499.2,512.1 L499.8,495.2 L500.5,500.6 L501.1,495.4 L501.7,509.3 L502.3,487.0 L502.9,493.0 L503.5,500.0 L504.1,488.7 L504.8,503.9 L505.4,512.0 L506.0,488.6 L506.6,488.5 L507.2,493.9 L507.8,507.9 L508.5,507.5 L509.1,494.6 L509.7,478.4 L510.3,500.1 L510.9,505.8 L511.5,480.2 L512.1,490.8 L512.8,496.5 L513.4,485.7 L514.0,483.0 L514.6,488.4 L515.2,493.7 L515.8,495.1 L516.4,491.3 L517.1,494.4 L517.7,495.6 L518.3,523.4 L518.9,491.5 L519.5,506.1 L520.1,504.6 L520.8,495.1 L521.4,501.8 L522.0,493.9 L522.6,502.7 L523.2,496.3 L523.8,496.3 L524.4,485.2 L525.1,496.6 L525.7,493.5 L526.3,508.1 L526.9,494.8 L527.5,500.7 L528.1,490.1 L528.8,504.1 L529.4,505.7 L530.0,499.5 L530.6,516.6 L531.2,487.8 L531.8,506.2 L532.4,486.8 L533.1,481.9 L533.7,501.3 L534.3,495.3 L534.9,477.8 L535.5,495.5 L536.1,495.4 L536.8,501.0 L537.4,521.9 L538.0,490.2 L538.6,505.2 L539.2,496.3 L539.8,531.8 L540.4,498.7 L541.1,519.5 L541.7,501.5 L542.3,495.9 L542.9,490.8 L543.5,503.1 L544.1,533.2 L544.8,491.0 L545.4,484.6 L546.0,487.6 L546.6,493.5 L547.2,501.4 L547.8,485.4 L548.4,492.2 L549.1,489.6 L549.7,503.8 L550.3,496.5 L550.9,487.6 L551.5,492.6 L552.1,503.5 L552.7,480.2 L553.4,500.1 L554.0,495.2 L554.6,489.1 L555.2,500.3 L555.8,483.0 L556.4,513.2 L557.1,492.4 L557.7,502.2 L558.3,489.5 L558.9,507.2 L559.5,484.0 L560.1,494.4 L560.7,513.4 L561.4,507.0 L562.0,494.8 L562.6,513.9 L563.2,511.6 L563.8,488.0 L564.4,503.0 L565.1,505.3 L565.7,510.7 L566.3,500.9 L566.9,492.2 L567.5,500.8 L568.1,521.6 L568.7,488.3 L569.4,496.7 L570.0,485.0 L570.6,486.3 L571.2,496.5 L571.8,488.9 L572.4,497.3 L573.1,492.2 L573.7,477.8 L574.3,501.2 L574.9,504.5 L575.5,482.1 L576.1,516.2 L576.7,495.0 L577.4,492.0 L578.0,494.8 L578.6,497.4 L579.2,508.6 L579.8,483.1 L580.4,487.7 L581.1,481.3 L581.7,493.5 L582.3,487.7 L582.9,494.9 L583.5,509.8 L584.1,495.7 L584.7,501.3 L585.4,478.8 L586.0,500.9 L586.6,492.2 L587.2,505.6 L587.8,492.3 L588.4,514.2 L589.0,501.2 L589.7,508.9 L590.3,488.8 L590.9,509.1 L591.5,497.3 L592.1,520.4 L592.7,486.7 L593.4,517.0 L594.0,497.5 L594.6,524.5 L595.2,492.6 L595.8,494.0 L596.4,493.9 L597.0,497.7 L597.7,502.9 L598.3,506.8 L598.9,486.8 L599.5,497.5 L600.1,504.0 L600.7,485.5 L601.4,485.1 L602.0,481.4 L602.6,500.0 L603.2,482.2 L603.8,500.3 L604.4,485.7 L605.0,499.6 L605.7,503.2 L606.3,488.1 L606.9,493.8 L607.5,490.5 L608.1,499.5 L608.7,496.1 L609.4,500.1 L610.0,513.2 L610.6,500.5 L611.2,500.6 L611.8,503.0 L612.4,507.4 L613.0,513.1 L613.7,499.4 L614.3,501.5 L614.9,495.1 L615.5,515.4 L616.1,488.5 L616.7,497.8 L617.4,500.8 L618.0,504.8 L618.6,488.2 L619.2,494.0 L619.8,486.9 L620.4,513.9 L621.0,492.0 L621.7,491.9 L622.3,516.5 L622.9,511.0 L623.5,484.2 L624.1,499.9 L624.7,494.7 L625.4,486.6 L626.0,492.8 L626.6,503.1 L627.2,497.9 L627.8,501.7 L628.4,508.4 L629.0,489.3 L629.7,480.5 L630.3,493.5 L630.9,483.5 L631.5,509.5 L632.1,497.1 L632.7,513.1 L633.3,494.9 L634.0,499.3 L634.6,506.1 L635.2,512.7 L635.8,513.1 L636.4,499.1 L637.0,493.3 L637.7,488.4 L638.3,494.4 L638.9,510.3 L639.5,499.4 L640.1,501.2 L640.7,509.2 L641.3,493.4 L642.0,491.7 L642.6,495.4 L643.2,492.1 L643.8,526.4 L644.4,492.1 L645.0,500.9 L645.7,498.9 L646.3,539.1 L646.9,506.6 L647.5,494.4 L648.1,500.8 L648.7,494.3 L649.3,520.2 L650.0,486.9 L650.6,508.4 L651.2,507.7 L651.8,501.5 L652.4,490.2 L653.0,489.1 L653.7,500.7 L654.3,502.9 L654.9,491.8 L655.5,532.6 L656.1,506.2 L656.7,491.5 L657.3,509.2 L658.0,503.2 L658.6,501.4 L659.2,504.0 L659.8,493.0 L660.4,504.5 L661.0,488.6 L661.7,485.5 L662.3,516.2 L662.9,496.6 L663.5,507.4 L664.1,492.7 L664.7,503.2 L665.3,524.0 L666.0,492.8 L666.6,493.8 L667.2,495.3 L667.8,492.5 L668.4,520.6 L669.0,495.8 L669.6,515.7 L670.3,477.8 L670.9,483.7 L671.5,498.6 L672.1,495.6 L672.7,494.0 L673.3,497.9 L674.0,522.0 L674.6,506.6 L675.2,505.2 L675.8,520.0 L676.4,537.0 L677.0,494.5 L677.6,505.1 L678.3,493.9 L678.9,494.4 L679.5,489.1 L680.1,509.6 L680.7,483.7 L681.3,508.6 L682.0,487.3 L682.6,511.6 L683.2,497.3 L683.8,504.8 L684.4,488.3 L685.0,492.2 L685.6,488.3 L686.3,498.3 L686.9,497.5 L687.5,509.4 L688.1,500.1 L688.7,488.6 L689.3,500.3 L690.0,496.0 L690.6,498.2 L691.2,493.0 L691.8,499.9 L692.4,490.8 L693.0,490.8 L693.6,511.1 L694.3,487.1 L694.9,521.9 L695.5,511.5 L696.1,495.9 L696.7,484.2 L697.3,488.8 L698.0,489.8 L698.6,499.3 L699.2,488.3 L699.8,508.1 L700.4,487.4" stroke="#3a78b6" stroke-width="1.8"/>
<path d="M71.4,419.3 L72.0,425.4 L72.6,431.5 L73.3,419.3 L73.9,400.9 L74.5,370.3 L75.1,186.6 L75.7,364.1 L76.3,413.2 L77.0,437.7 L77.6,495.4 L78.2,395.0 L78.8,503.7 L79.4,495.8 L80.0,480.1 L80.6,505.4 L81.3,489.4 L81.9,430.1 L82.5,519.8 L83.1,504.1 L83.7,486.4 L84.3,489.9 L85.0,500.8 L85.6,401.2 L86.2,514.1 L86.8,502.4 L87.4,512.6 L88.0,481.9 L88.6,496.9 L89.3,424.8 L89.9,506.5 L90.5,496.7 L91.1,487.9 L91.7,480.1 L92.3,392.6 L93.0,486.6 L93.6,522.9 L94.2,520.9 L94.8,496.6 L95.4,502.7 L96.0,390.7 L96.6,504.4 L97.3,494.5 L97.9,492.1 L98.5,490.4 L99.1,498.0 L99.7,420.2 L100.3,489.3 L100.9,492.2 L101.6,480.1 L102.2,541.3 L102.8,492.1 L103.4,415.6 L104.0,494.6 L104.6,506.7 L105.3,499.9 L105.9,492.6 L106.5,428.0 L107.1,495.4 L107.7,521.3 L108.3,498.3 L108.9,507.2 L109.6,508.6 L110.2,447.0 L110.8,514.3 L111.4,489.5 L112.0,494.5 L112.6,499.8 L113.3,496.2 L113.9,394.2 L114.5,490.3 L115.1,501.9 L115.7,503.4 L116.3,507.8 L116.9,506.5 L117.6,421.4 L118.2,500.4 L118.8,521.1 L119.4,498.2 L120.0,497.7 L120.6,425.7 L121.3,505.4 L121.9,493.8 L122.5,484.9 L123.1,502.7 L123.7,495.1 L124.3,429.5 L124.9,507.2 L125.6,492.3 L126.2,500.8 L126.8,517.6 L127.4,509.7 L128.0,444.0 L128.6,514.4 L129.3,491.3 L129.9,495.7 L130.5,494.3 L131.1,517.7 L131.7,423.8 L132.3,505.2 L132.9,500.1 L133.6,529.2 L134.2,501.1 L134.8,480.1 L135.4,501.1 L136.0,488.6 L136.6,485.2 L137.2,480.1 L137.9,499.5 L138.5,415.0 L139.1,490.7 L139.7,494.1 L140.3,480.9 L140.9,480.1 L141.6,486.3 L142.2,431.0 L142.8,505.6 L143.4,486.4 L144.0,509.6 L144.6,520.4 L145.2,511.4 L145.9,438.9 L146.5,496.1 L147.1,506.5 L147.7,498.8 L148.3,503.0 L148.9,413.8 L149.6,508.9 L150.2,518.9 L150.8,503.8 L151.4,486.6 L152.0,503.7 L152.6,425.5 L153.2,510.9 L153.9,504.5 L154.5,501.0 L155.1,510.6 L155.7,487.0 L156.3,423.0 L156.9,497.1 L157.6,492.0 L158.2,504.0 L158.8,514.6 L159.4,496.9 L160.0,440.5 L160.6,483.0 L161.2,501.2 L161.9,500.0 L162.5,484.6 L163.1,434.4 L163.7,502.2 L164.3,493.3 L164.9,504.5 L165.6,492.8 L166.2,488.9 L166.8,429.3 L167.4,494.8 L168.0,507.7 L168.6,523.0 L169.2,504.6 L169.9,507.2 L170.5,462.5 L171.1,513.1 L171.7,487.2 L172.3,504.3 L172.9,489.5 L173.6,491.6 L174.2,462.0 L174.8,494.4 L175.4,502.2 L176.0,489.1 L176.6,489.4 L177.2,443.2 L177.9,482.7 L178.5,507.8 L179.1,483.4 L179.7,498.0 L180.3,503.5 L180.9,491.3 L181.5,486.3 L182.2,512.9 L182.8,526.9 L183.4,501.6 L184.0,497.1 L184.6,464.6 L185.2,498.0 L185.9,501.3 L186.5,536.6 L187.1,511.1 L187.7,506.3 L188.3,444.4 L188.9,499.5 L189.5,512.1 L190.2,496.7 L190.8,510.4 L191.4,437.3 L192.0,511.3 L192.6,502.3 L193.2,480.1 L193.9,504.5 L194.5,501.7 L195.1,483.9 L195.7,508.4 L196.3,492.6 L196.9,498.1 L197.5,504.1 L198.2,498.6 L198.8,435.3 L199.4,498.7 L200.0,489.9 L200.6,498.8 L201.2,513.9 L201.9,489.5 L202.5,480.8 L203.1,489.2 L203.7,493.2 L204.3,486.9 L204.9,496.5 L205.5,466.3 L206.2,518.7 L206.8,495.3 L207.4,487.3 L208.0,499.7 L208.6,495.8 L209.2,464.0 L209.9,495.3 L210.5,496.2 L211.1,496.8 L211.7,494.2 L212.3,493.8 L212.9,427.3 L213.5,489.2 L214.2,500.4 L214.8,492.1 L215.4,501.5 L216.0,488.3 L216.6,472.8 L217.2,488.7 L217.8,507.1 L218.5,492.3 L219.1,493.7 L219.7,433.4 L220.3,507.4 L220.9,509.1 L221.5,497.9 L222.2,489.2 L222.8,505.5 L223.4,486.4 L224.0,506.5 L224.6,517.0 L225.2,484.7 L225.8,486.5 L226.5,498.7 L227.1,441.1 L227.7,510.5 L228.3,506.1 L228.9,498.8 L229.5,494.2 L230.2,486.1 L230.8,457.6 L231.4,496.1 L232.0,480.1 L232.6,502.0 L233.2,502.0 L233.8,440.6 L234.5,506.8 L235.1,497.2 L235.7,505.5 L236.3,487.3 L236.9,509.9 L237.5,496.8 L238.2,490.6 L238.8,515.6 L239.4,503.6 L240.0,492.6 L240.6,481.6 L241.2,485.4 L241.8,495.8 L242.5,512.9 L243.1,499.8 L243.7,493.9 L244.3,491.8 L244.9,476.7 L245.5,500.4 L246.2,497.5 L246.8,503.2 L247.4,518.7 L248.0,480.6 L248.6,515.6 L249.2,504.1 L249.8,509.6 L250.5,497.7 L251.1,496.2 L251.7,456.1 L252.3,511.0 L252.9,489.0 L253.5,496.9 L254.1,496.6 L254.8,511.8 L255.4,471.1 L256.0,489.1 L256.6,484.9 L257.2,503.9 L257.8,509.3 L258.5,489.6 L259.1,474.6 L259.7,489.8 L260.3,511.2 L260.9,509.1 L261.5,500.3 L262.1,429.0 L262.8,483.6 L263.4,489.1 L264.0,494.2 L264.6,529.3 L265.2,485.3 L265.8,465.8 L266.5,494.5 L267.1,508.6 L267.7,490.3 L268.3,481.4 L268.9,501.8 L269.5,460.1 L270.1,488.8 L270.8,514.8 L271.4,507.2 L272.0,503.7 L272.6,488.4 L273.2,496.4 L273.8,487.0 L274.5,486.5 L275.1,505.0 L275.7,498.0 L276.3,460.4 L276.9,503.6 L277.5,504.1 L278.1,518.6 L278.8,509.4 L279.4,496.6 L280.0,492.8 L280.6,512.7 L281.2,502.6 L281.8,483.4 L282.5,505.2 L283.1,496.0 L283.7,457.9 L284.3,496.9 L284.9,510.3 L285.5,489.2 L286.1,501.0 L286.8,512.1 L287.4,505.2 L288.0,513.6 L288.6,518.9 L289.2,502.8 L289.8,501.0 L290.4,482.4 L291.1,486.6 L291.7,496.6 L292.3,500.0 L292.9,493.2 L293.5,517.1 L294.1,480.2 L294.8,506.2 L295.4,493.2 L296.0,490.6 L296.6,506.4 L297.2,504.7 L297.8,464.2 L298.4,488.3 L299.1,502.6 L299.7,499.0 L300.3,497.1 L300.9,494.8 L301.5,513.3 L302.1,486.3 L302.8,482.9 L303.4,511.5 L304.0,502.8 L304.6,468.8 L305.2,485.2 L305.8,500.5 L306.4,498.7 L307.1,501.3 L307.7,511.1 L308.3,480.9 L308.9,514.0 L309.5,504.2 L310.1,494.0 L310.8,507.8 L311.4,517.6 L312.0,456.1 L312.6,489.2 L313.2,494.6 L313.8,510.5 L314.4,487.3 L315.1,490.6 L315.7,492.5 L316.3,483.5 L316.9,498.4 L317.5,489.4 L318.1,488.9 L318.8,426.6 L319.4,503.3 L320.0,502.4 L320.6,501.1 L321.2,502.5 L321.8,487.3 L322.4,486.1 L323.1,500.2 L323.7,512.4 L324.3,515.8 L324.9,482.3 L325.5,512.4 L326.1,471.9 L326.8,481.3 L327.4,494.1 L328.0,510.8 L328.6,496.5 L329.2,499.7 L329.8,506.3 L330.4,502.0 L331.1,488.3 L331.7,495.8 L332.3,493.4 L332.9,466.7 L333.5,504.3 L334.1,494.1 L334.7,488.3 L335.4,500.2 L336.0,523.6 L336.6,486.0 L337.2,503.2 L337.8,495.5 L338.4,510.1 L339.1,512.7 L339.7,488.7 L340.3,469.3 L340.9,497.7 L341.5,489.2 L342.1,503.2 L342.7,506.1 L343.4,481.2 L344.0,506.9 L344.6,540.9 L345.2,502.7 L345.8,486.4 L346.4,503.2 L347.1,445.6 L347.7,502.2 L348.3,491.1 L348.9,507.1 L349.5,518.1 L350.1,502.6 L350.7,495.1 L351.4,516.2 L352.0,499.3 L352.6,504.6 L353.2,496.7 L353.8,500.6 L354.4,464.2 L355.1,491.9 L355.7,498.5 L356.3,495.3 L356.9,512.1 L357.5,498.0 L358.1,512.7 L358.7,495.1 L359.4,499.6 L360.0,499.8 L360.6,516.1 L361.2,451.7 L361.8,497.5 L362.4,497.2 L363.1,493.0 L363.7,490.7 L364.3,511.2 L364.9,479.2 L365.5,502.0 L366.1,513.3 L366.7,519.5 L367.4,493.0 L368.0,501.2 L368.6,457.6 L369.2,527.0 L369.8,494.0 L370.4,492.4 L371.0,515.6 L371.7,496.4 L372.3,500.3 L372.9,493.1 L373.5,506.9 L374.1,492.5 L374.7,491.7 L375.4,486.5 L376.0,491.3 L376.6,482.9 L377.2,512.6 L377.8,480.1 L378.4,489.2 L379.0,514.1 L379.7,508.7 L380.3,501.5 L380.9,502.3 L381.5,501.2 L382.1,496.7 L382.7,448.8 L383.4,512.3 L384.0,491.2 L384.6,502.9 L385.2,498.4 L385.8,482.9 L386.4,505.5 L387.0,491.5 L387.7,497.1 L388.3,504.3 L388.9,503.9 L389.5,447.5 L390.1,503.0 L390.7,497.2 L391.4,485.9 L392.0,512.3 L392.6,493.9 L393.2,501.3 L393.8,492.2 L394.4,498.6 L395.0,531.2 L395.7,519.1 L396.3,497.9 L396.9,464.2 L397.5,508.6 L398.1,506.4 L398.7,493.3 L399.4,503.7 L400.0,491.2 L400.6,486.4 L401.2,505.6 L401.8,500.1 L402.4,495.3 L403.0,520.5 L403.7,415.2 L404.3,493.9 L404.9,500.7 L405.5,499.4 L406.1,503.1 L406.7,498.3 L407.3,488.5 L408.0,517.3 L408.6,494.5 L409.2,494.9 L409.8,506.2 L410.4,507.7 L411.0,455.8 L411.7,503.1 L412.3,491.8 L412.9,495.3 L413.5,489.1 L414.1,477.8 L414.7,501.3 L415.3,511.1 L416.0,496.3 L416.6,500.4 L417.2,503.1 L417.8,467.9 L418.4,534.1 L419.0,487.1 L419.7,506.3 L420.3,509.9 L420.9,485.6 L421.5,494.4 L422.1,493.2 L422.7,507.1 L423.3,481.1 L424.0,499.8 L424.6,501.7 L425.2,460.1 L425.8,485.2 L426.4,506.3 L427.0,493.2 L427.7,504.4 L428.3,489.2 L428.9,505.5 L429.5,500.6 L430.1,502.9 L430.7,508.9 L431.3,484.0 L432.0,466.4 L432.6,494.9 L433.2,491.0 L433.8,500.2 L434.4,491.2 L435.0,499.5 L435.7,474.7 L436.3,499.2 L436.9,496.3 L437.5,522.8 L438.1,506.6 L438.7,505.6 L439.3,452.4 L440.0,490.5 L440.6,500.7 L441.2,522.2 L441.8,494.9 L442.4,488.0 L443.0,494.0 L443.6,510.2 L444.3,507.8 L444.9,500.4 L445.5,527.7 L446.1,495.7 L446.7,492.3 L447.3,502.4 L448.0,499.0 L448.6,501.3 L449.2,507.8 L449.8,491.9 L450.4,518.3 L451.0,492.5 L451.6,490.3 L452.3,492.7 L452.9,520.1 L453.5,486.4 L454.1,493.5 L454.7,498.9 L455.3,502.5 L456.0,491.8 L456.6,496.8 L457.2,533.4 L457.8,493.7 L458.4,499.9 L459.0,499.1 L459.6,507.9 L460.3,504.4 L460.9,500.5 L461.5,500.7 L462.1,514.2 L462.7,501.3 L463.3,499.3 L464.0,509.0 L464.6,507.7 L465.2,489.4 L465.8,495.3 L466.4,488.5 L467.0,495.5 L467.6,495.9 L468.3,515.6 L468.9,491.6 L469.5,486.6 L470.1,498.9 L470.7,506.9 L471.3,501.2 L472.0,510.5 L472.6,504.0 L473.2,509.5 L473.8,488.1 L474.4,519.1 L475.0,506.0 L475.6,500.7 L476.3,490.1 L476.9,497.1 L477.5,504.1 L478.1,486.6 L478.7,488.7 L479.3,505.7 L480.0,515.1 L480.6,511.4 L481.2,486.9 L481.8,512.9 L482.4,508.3 L483.0,537.2 L483.6,498.5 L484.3,497.4 L484.9,494.6 L485.5,494.9 L486.1,506.0 L486.7,506.8 L487.3,487.6 L487.9,496.1 L488.6,500.4 L489.2,485.2 L489.8,507.5 L490.4,494.7 L491.0,491.7 L491.6,514.9 L492.3,497.8 L492.9,492.8 L493.5,515.0 L494.1,517.4 L494.7,486.9 L495.3,485.0 L495.9,538.9 L496.6,495.9 L497.2,495.2 L497.8,510.7 L498.4,491.7 L499.0,498.9 L499.6,498.0 L500.3,507.6 L500.9,509.9 L501.5,503.2 L502.1,491.7 L502.7,509.0 L503.3,495.7 L503.9,505.2 L504.6,501.2 L505.2,491.6 L505.8,500.3 L506.4,496.6 L507.0,514.5 L507.6,492.0 L508.3,506.1 L508.9,502.7 L509.5,495.2 L510.1,514.4 L510.7,507.5 L511.3,501.3 L511.9,502.2 L512.6,500.9 L513.2,495.4 L513.8,492.9 L514.4,505.9 L515.0,488.5 L515.6,498.0 L516.3,500.0 L516.9,497.7 L517.5,503.4 L518.1,505.9 L518.7,505.4 L519.3,485.1 L519.9,487.2 L520.6,483.2 L521.2,497.5 L521.8,535.2 L522.4,491.0 L523.0,494.8 L523.6,506.1 L524.2,500.3 L524.9,503.1 L525.5,498.5 L526.1,496.8 L526.7,498.5 L527.3,488.7 L527.9,486.6 L528.6,493.2 L529.2,496.5 L529.8,506.8 L530.4,491.4 L531.0,487.9 L531.6,491.9 L532.2,480.1 L532.9,510.8 L533.5,497.3 L534.1,488.8 L534.7,519.1 L535.3,492.2 L535.9,501.8 L536.6,490.4 L537.2,485.9 L537.8,495.4 L538.4,481.6 L539.0,483.2 L539.6,492.2 L540.2,535.6 L540.9,490.8 L541.5,502.9 L542.1,491.7 L542.7,499.3 L543.3,499.9 L543.9,507.1 L544.6,492.6 L545.2,505.2 L545.8,511.6 L546.4,500.5 L547.0,506.8 L547.6,491.9 L548.2,498.9 L548.9,496.4 L549.5,520.5 L550.1,520.3 L550.7,508.3 L551.3,488.1 L551.9,513.0 L552.6,516.5 L553.2,495.0 L553.8,513.3 L554.4,504.9 L555.0,491.2 L555.6,492.2 L556.2,486.3 L556.9,485.6 L557.5,492.4 L558.1,502.2 L558.7,501.9 L559.3,487.1 L559.9,498.6 L560.5,500.8 L561.2,489.9 L561.8,498.6 L562.4,502.7 L563.0,508.8 L563.6,501.3 L564.2,517.3 L564.9,496.8 L565.5,502.2 L566.1,497.1 L566.7,494.5 L567.3,493.7 L567.9,504.4 L568.5,504.5 L569.2,525.3 L569.8,507.0 L570.4,501.2 L571.0,499.8 L571.6,498.8 L572.2,485.0 L572.9,489.6 L573.5,504.0 L574.1,502.4 L574.7,517.7 L575.3,502.3 L575.9,480.1 L576.5,502.6 L577.2,507.3 L577.8,486.2 L578.4,516.3 L579.0,496.9 L579.6,500.7 L580.2,496.8 L580.9,494.9 L581.5,500.2 L582.1,494.8 L582.7,508.5 L583.3,495.8 L583.9,528.2 L584.5,498.8 L585.2,505.8 L585.8,497.8 L586.4,499.5 L587.0,493.9 L587.6,482.4 L588.2,541.4 L588.9,495.5 L589.5,512.5 L590.1,494.3 L590.7,503.3 L591.3,494.0 L591.9,494.2 L592.5,495.1 L593.2,496.4 L593.8,495.9 L594.4,489.2 L595.0,507.5 L595.6,488.4 L596.2,490.9 L596.8,512.4 L597.5,501.4 L598.1,508.1 L598.7,505.8 L599.3,484.4 L599.9,491.5 L600.5,495.0 L601.2,506.0 L601.8,497.0 L602.4,501.8 L603.0,492.3 L603.6,507.4 L604.2,518.5 L604.8,505.5 L605.5,499.7 L606.1,496.6 L606.7,518.4 L607.3,501.1 L607.9,488.4 L608.5,497.0 L609.2,494.1 L609.8,489.5 L610.4,501.9 L611.0,490.0 L611.6,489.2 L612.2,504.6 L612.8,486.6 L613.5,517.6 L614.1,504.0 L614.7,509.1 L615.3,486.3 L615.9,490.3 L616.5,486.3 L617.2,494.4 L617.8,510.2 L618.4,492.1 L619.0,486.8 L619.6,489.1 L620.2,485.6 L620.8,490.9 L621.5,489.7 L622.1,494.5 L622.7,499.5 L623.3,504.5 L623.9,496.1 L624.5,527.0 L625.2,495.1 L625.8,507.3 L626.4,502.7 L627.0,506.3 L627.6,480.4 L628.2,506.7 L628.8,495.0 L629.5,498.5 L630.1,500.5 L630.7,483.2 L631.3,503.3 L631.9,499.7 L632.5,495.8 L633.2,491.4 L633.8,486.8 L634.4,505.5 L635.0,480.1 L635.6,503.5 L636.2,511.1 L636.8,519.8 L637.5,506.9 L638.1,505.0 L638.7,492.9 L639.3,498.1 L639.9,509.2 L640.5,508.3 L641.1,494.6 L641.8,502.5 L642.4,499.8 L643.0,538.6 L643.6,499.2 L644.2,514.2 L644.8,526.1 L645.5,507.7 L646.1,518.4 L646.7,493.6 L647.3,496.5 L647.9,502.7 L648.5,502.2 L649.1,512.7 L649.8,494.1 L650.4,508.7 L651.0,519.2 L651.6,495.0 L652.2,517.1 L652.8,501.6 L653.5,504.2 L654.1,493.8 L654.7,508.1 L655.3,513.4 L655.9,495.5 L656.5,489.9 L657.1,507.0 L657.8,500.3 L658.4,500.4 L659.0,508.0 L659.6,494.6 L660.2,488.8 L660.8,488.1 L661.5,506.7 L662.1,512.4 L662.7,520.6 L663.3,497.1 L663.9,495.3 L664.5,485.7 L665.1,491.0 L665.8,532.4 L666.4,520.5 L667.0,500.6 L667.6,481.5 L668.2,486.5 L668.8,510.2 L669.5,490.8 L670.1,506.3 L670.7,488.8 L671.3,487.3 L671.9,515.4 L672.5,497.5 L673.1,501.7 L673.8,501.0 L674.4,507.4 L675.0,499.2 L675.6,489.3 L676.2,497.6 L676.8,502.6 L677.4,490.7 L678.1,506.6 L678.7,488.4 L679.3,495.8 L679.9,505.6 L680.5,511.8 L681.1,508.4 L681.8,495.4 L682.4,487.2 L683.0,500.8 L683.6,497.3 L684.2,485.5 L684.8,506.8 L685.4,505.5 L686.1,528.2 L686.7,509.5 L687.3,496.6 L687.9,491.1 L688.5,514.1 L689.1,518.6 L689.8,500.0 L690.4,495.0 L691.0,494.3 L691.6,507.3 L692.2,488.0 L692.8,503.5 L693.4,506.2 L694.1,505.3 L694.7,487.2 L695.3,499.8 L695.9,515.1 L696.5,515.9 L697.1,517.1 L697.8,498.0 L698.4,485.7 L699.0,509.8 L699.6,511.5 L700.2,493.3 L700.8,493.8" stroke="rgba(0,0,0,0.1)" stroke-width="3"/>
<path d="M71.3,418.6 L71.9,424.7 L72.5,430.8 L73.1,418.6 L73.7,400.2 L74.4,369.5 L75.0,185.9 L75.6,363.4 L76.2,412.4 L76.8,436.9 L77.4,494.6 L78.1,394.3 L78.7,503.0 L79.3,495.1 L79.9,479.4 L80.5,504.7 L81.1,488.7 L81.7,429.3 L82.4,519.1 L83.0,503.4 L83.6,485.7 L84.2,489.2 L84.8,500.1 L85.4,400.4 L86.1,513.3 L86.7,501.7 L87.3,511.8 L87.9,481.2 L88.5,496.1 L89.1,424.0 L89.7,505.8 L90.4,496.0 L91.0,487.2 L91.6,479.4 L92.2,391.8 L92.8,485.9 L93.4,522.2 L94.1,520.2 L94.7,495.9 L95.3,502.0 L95.9,390.0 L96.5,503.6 L97.1,493.8 L97.7,491.4 L98.4,489.7 L99.0,497.3 L99.6,419.5 L100.2,488.6 L100.8,491.4 L101.4,479.4 L102.0,540.6 L102.7,491.4 L103.3,414.9 L103.9,493.8 L104.5,506.0 L105.1,499.2 L105.7,491.9 L106.4,427.2 L107.0,494.6 L107.6,520.6 L108.2,497.5 L108.8,506.5 L109.4,507.9 L110.0,446.2 L110.7,513.5 L111.3,488.8 L111.9,493.7 L112.5,499.1 L113.1,495.4 L113.7,393.4 L114.4,489.5 L115.0,501.1 L115.6,502.7 L116.2,507.1 L116.8,505.8 L117.4,420.7 L118.0,499.7 L118.7,520.4 L119.3,497.5 L119.9,497.0 L120.5,424.9 L121.1,504.6 L121.7,493.0 L122.4,484.2 L123.0,502.0 L123.6,494.3 L124.2,428.7 L124.8,506.4 L125.4,491.5 L126.0,500.1 L126.7,516.8 L127.3,509.0 L127.9,443.2 L128.5,513.6 L129.1,490.6 L129.7,494.9 L130.4,493.5 L131.0,516.9 L131.6,423.1 L132.2,504.5 L132.8,499.4 L133.4,528.4 L134.0,500.4 L134.7,479.4 L135.3,500.4 L135.9,487.9 L136.5,484.5 L137.1,479.4 L137.7,498.8 L138.3,414.3 L139.0,490.0 L139.6,493.3 L140.2,480.1 L140.8,479.4 L141.4,485.6 L142.0,430.3 L142.7,504.8 L143.3,485.7 L143.9,508.8 L144.5,519.6 L145.1,510.6 L145.7,438.1 L146.3,495.3 L147.0,505.8 L147.6,498.1 L148.2,502.3 L148.8,413.0 L149.4,508.1 L150.0,518.2 L150.7,503.0 L151.3,485.9 L151.9,503.0 L152.5,424.7 L153.1,510.1 L153.7,503.8 L154.3,500.3 L155.0,509.9 L155.6,486.3 L156.2,422.3 L156.8,496.4 L157.4,491.2 L158.0,503.2 L158.7,513.9 L159.3,496.2 L159.9,439.7 L160.5,482.3 L161.1,500.5 L161.7,499.3 L162.3,483.9 L163.0,433.7 L163.6,501.5 L164.2,492.6 L164.8,503.7 L165.4,492.0 L166.0,488.2 L166.7,428.6 L167.3,494.1 L167.9,506.9 L168.5,522.3 L169.1,503.9 L169.7,506.4 L170.3,461.8 L171.0,512.4 L171.6,486.5 L172.2,503.5 L172.8,488.8 L173.4,490.8 L174.0,461.2 L174.7,493.7 L175.3,501.5 L175.9,488.4 L176.5,488.7 L177.1,442.5 L177.7,482.0 L178.3,507.0 L179.0,482.7 L179.6,497.2 L180.2,502.8 L180.8,490.6 L181.4,485.5 L182.0,512.2 L182.6,526.2 L183.3,500.9 L183.9,496.4 L184.5,463.8 L185.1,497.3 L185.7,500.5 L186.3,535.8 L187.0,510.4 L187.6,505.6 L188.2,443.7 L188.8,498.8 L189.4,511.3 L190.0,496.0 L190.6,509.7 L191.3,436.5 L191.9,510.6 L192.5,501.5 L193.1,479.4 L193.7,503.7 L194.3,501.0 L195.0,483.2 L195.6,507.7 L196.2,491.9 L196.8,497.3 L197.4,503.4 L198.0,497.9 L198.6,434.6 L199.3,497.9 L199.9,489.2 L200.5,498.1 L201.1,513.2 L201.7,488.7 L202.3,480.1 L203.0,488.5 L203.6,492.5 L204.2,486.1 L204.8,495.7 L205.4,465.5 L206.0,518.0 L206.6,494.6 L207.3,486.5 L207.9,498.9 L208.5,495.1 L209.1,463.2 L209.7,494.5 L210.3,495.4 L211.0,496.1 L211.6,493.5 L212.2,493.1 L212.8,426.6 L213.4,488.5 L214.0,499.7 L214.6,491.3 L215.3,500.8 L215.9,487.6 L216.5,472.0 L217.1,487.9 L217.7,506.4 L218.3,491.6 L218.9,493.0 L219.6,432.7 L220.2,506.7 L220.8,508.3 L221.4,497.2 L222.0,488.5 L222.6,504.7 L223.3,485.6 L223.9,505.7 L224.5,516.2 L225.1,484.0 L225.7,485.8 L226.3,498.0 L226.9,440.4 L227.6,509.8 L228.2,505.3 L228.8,498.1 L229.4,493.5 L230.0,485.3 L230.6,456.9 L231.3,495.4 L231.9,479.4 L232.5,501.2 L233.1,501.2 L233.7,439.8 L234.3,506.1 L234.9,496.4 L235.6,504.7 L236.2,486.6 L236.8,509.2 L237.4,496.1 L238.0,489.8 L238.6,514.8 L239.3,502.8 L239.9,491.8 L240.5,480.9 L241.1,484.6 L241.7,495.1 L242.3,512.2 L242.9,499.1 L243.6,493.2 L244.2,491.0 L244.8,475.9 L245.4,499.6 L246.0,496.7 L246.6,502.5 L247.3,517.9 L247.9,479.8 L248.5,514.9 L249.1,503.3 L249.7,508.9 L250.3,497.0 L250.9,495.4 L251.6,455.3 L252.2,510.2 L252.8,488.3 L253.4,496.2 L254.0,495.8 L254.6,511.1 L255.2,470.4 L255.9,488.3 L256.5,484.1 L257.1,503.2 L257.7,508.6 L258.3,488.9 L258.9,473.9 L259.6,489.0 L260.2,510.5 L260.8,508.4 L261.4,499.6 L262.0,428.3 L262.6,482.9 L263.2,488.4 L263.9,493.4 L264.5,528.6 L265.1,484.5 L265.7,465.1 L266.3,493.7 L266.9,507.8 L267.6,489.5 L268.2,480.7 L268.8,501.1 L269.4,459.3 L270.0,488.0 L270.6,514.1 L271.2,506.5 L271.9,503.0 L272.5,487.6 L273.1,495.7 L273.7,486.3 L274.3,485.7 L274.9,504.3 L275.6,497.3 L276.2,459.7 L276.8,502.9 L277.4,503.4 L278.0,517.9 L278.6,508.6 L279.2,495.8 L279.9,492.1 L280.5,512.0 L281.1,501.8 L281.7,482.7 L282.3,504.4 L282.9,495.2 L283.6,457.2 L284.2,496.2 L284.8,509.5 L285.4,488.4 L286.0,500.3 L286.6,511.4 L287.2,504.5 L287.9,512.9 L288.5,518.1 L289.1,502.1 L289.7,500.2 L290.3,481.7 L290.9,485.8 L291.5,495.8 L292.2,499.3 L292.8,492.4 L293.4,516.4 L294.0,479.4 L294.6,505.5 L295.2,492.4 L295.9,489.8 L296.5,505.6 L297.1,503.9 L297.7,463.4 L298.3,487.6 L298.9,501.8 L299.5,498.2 L300.2,496.4 L300.8,494.1 L301.4,512.6 L302.0,485.6 L302.6,482.1 L303.2,510.8 L303.9,502.0 L304.5,468.1 L305.1,484.4 L305.7,499.7 L306.3,497.9 L306.9,500.6 L307.5,510.4 L308.2,480.1 L308.8,513.2 L309.4,503.5 L310.0,493.2 L310.6,507.1 L311.2,516.9 L311.9,455.3 L312.5,488.5 L313.1,493.8 L313.7,509.7 L314.3,486.5 L314.9,489.9 L315.5,491.8 L316.2,482.7 L316.8,497.7 L317.4,488.7 L318.0,488.1 L318.6,425.9 L319.2,502.6 L319.9,501.7 L320.5,500.4 L321.1,501.8 L321.7,486.6 L322.3,485.4 L322.9,499.5 L323.5,511.7 L324.2,515.0 L324.8,481.6 L325.4,511.7 L326.0,471.2 L326.6,480.6 L327.2,493.4 L327.9,510.1 L328.5,495.8 L329.1,498.9 L329.7,505.5 L330.3,501.3 L330.9,487.6 L331.5,495.1 L332.2,492.7 L332.8,466.0 L333.4,503.5 L334.0,493.4 L334.6,487.5 L335.2,499.5 L335.8,522.8 L336.5,485.3 L337.1,502.5 L337.7,494.8 L338.3,509.4 L338.9,512.0 L339.5,488.0 L340.2,468.5 L340.8,497.0 L341.4,488.5 L342.0,502.4 L342.6,505.4 L343.2,480.5 L343.8,506.1 L344.5,540.2 L345.1,501.9 L345.7,485.7 L346.3,502.4 L346.9,444.9 L347.5,501.4 L348.2,490.4 L348.8,506.4 L349.4,517.3 L350.0,501.9 L350.6,494.3 L351.2,515.5 L351.8,498.6 L352.5,503.9 L353.1,496.0 L353.7,499.9 L354.3,463.5 L354.9,491.2 L355.5,497.8 L356.2,494.6 L356.8,511.3 L357.4,497.2 L358.0,512.0 L358.6,494.3 L359.2,498.9 L359.8,499.1 L360.5,515.4 L361.1,451.0 L361.7,496.8 L362.3,496.5 L362.9,492.3 L363.5,490.0 L364.2,510.5 L364.8,478.4 L365.4,501.3 L366.0,512.5 L366.6,518.7 L367.2,492.2 L367.8,500.4 L368.5,456.9 L369.1,526.3 L369.7,493.2 L370.3,491.7 L370.9,514.9 L371.5,495.7 L372.1,499.5 L372.8,492.4 L373.4,506.2 L374.0,491.8 L374.6,491.0 L375.2,485.7 L375.8,490.6 L376.5,482.1 L377.1,511.8 L377.7,479.4 L378.3,488.5 L378.9,513.4 L379.5,507.9 L380.1,500.8 L380.8,501.6 L381.4,500.4 L382.0,495.9 L382.6,448.0 L383.2,511.6 L383.8,490.5 L384.5,502.2 L385.1,497.7 L385.7,482.2 L386.3,504.7 L386.9,490.7 L387.5,496.3 L388.1,503.5 L388.8,503.2 L389.4,446.7 L390.0,502.2 L390.6,496.4 L391.2,485.1 L391.8,511.5 L392.5,493.2 L393.1,500.6 L393.7,491.5 L394.3,497.8 L394.9,530.4 L395.5,518.4 L396.1,497.2 L396.8,463.4 L397.4,507.9 L398.0,505.6 L398.6,492.6 L399.2,503.0 L399.8,490.5 L400.5,485.7 L401.1,504.9 L401.7,499.4 L402.3,494.5 L402.9,519.8 L403.5,414.5 L404.1,493.2 L404.8,500.0 L405.4,498.7 L406.0,502.4 L406.6,497.6 L407.2,487.7 L407.8,516.6 L408.4,493.7 L409.1,494.1 L409.7,505.5 L410.3,507.0 L410.9,455.1 L411.5,502.3 L412.1,491.1 L412.8,494.5 L413.4,488.4 L414.0,477.1 L414.6,500.5 L415.2,510.3 L415.8,495.6 L416.4,499.6 L417.1,502.4 L417.7,467.2 L418.3,533.4 L418.9,486.4 L419.5,505.6 L420.1,509.2 L420.8,484.9 L421.4,493.7 L422.0,492.5 L422.6,506.3 L423.2,480.3 L423.8,499.0 L424.4,500.9 L425.1,459.4 L425.7,484.5 L426.3,505.6 L426.9,492.5 L427.5,503.7 L428.1,488.4 L428.8,504.8 L429.4,499.8 L430.0,502.2 L430.6,508.1 L431.2,483.3 L431.8,465.6 L432.4,494.1 L433.1,490.2 L433.7,499.4 L434.3,490.5 L434.9,498.7 L435.5,474.0 L436.1,498.4 L436.8,495.6 L437.4,522.1 L438.0,505.9 L438.6,504.9 L439.2,451.6 L439.8,489.8 L440.4,499.9 L441.1,521.5 L441.7,494.2 L442.3,487.3 L442.9,493.3 L443.5,509.5 L444.1,507.1 L444.7,499.6 L445.4,527.0 L446.0,495.0 L446.6,491.6 L447.2,501.7 L447.8,498.3 L448.4,500.5 L449.1,507.1 L449.7,491.2 L450.3,517.6 L450.9,491.8 L451.5,489.5 L452.1,491.9 L452.7,519.3 L453.4,485.7 L454.0,492.8 L454.6,498.2 L455.2,501.8 L455.8,491.1 L456.4,496.1 L457.1,532.7 L457.7,493.0 L458.3,499.1 L458.9,498.4 L459.5,507.2 L460.1,503.7 L460.7,499.8 L461.4,500.0 L462.0,513.5 L462.6,500.6 L463.2,498.6 L463.8,508.2 L464.4,506.9 L465.1,488.7 L465.7,494.6 L466.3,487.8 L466.9,494.8 L467.5,495.2 L468.1,514.9 L468.7,490.8 L469.4,485.8 L470.0,498.2 L470.6,506.1 L471.2,500.4 L471.8,509.7 L472.4,503.3 L473.1,508.8 L473.7,487.4 L474.3,518.4 L474.9,505.2 L475.5,500.0 L476.1,489.4 L476.7,496.3 L477.4,503.4 L478.0,485.9 L478.6,487.9 L479.2,505.0 L479.8,514.3 L480.4,510.7 L481.1,486.2 L481.7,512.2 L482.3,507.6 L482.9,536.5 L483.5,497.7 L484.1,496.7 L484.7,493.8 L485.4,494.1 L486.0,505.2 L486.6,506.0 L487.2,486.8 L487.8,495.4 L488.4,499.6 L489.0,484.5 L489.7,506.8 L490.3,493.9 L490.9,490.9 L491.5,514.2 L492.1,497.1 L492.7,492.0 L493.4,514.2 L494.0,516.7 L494.6,486.2 L495.2,484.3 L495.8,538.1 L496.4,495.2 L497.0,494.5 L497.7,509.9 L498.3,491.0 L498.9,498.2 L499.5,497.3 L500.1,506.9 L500.7,509.1 L501.4,502.4 L502.0,491.0 L502.6,508.3 L503.2,495.0 L503.8,504.4 L504.4,500.5 L505.0,490.9 L505.7,499.6 L506.3,495.9 L506.9,513.7 L507.5,491.3 L508.1,505.4 L508.7,502.0 L509.4,494.5 L510.0,513.7 L510.6,506.7 L511.2,500.6 L511.8,501.5 L512.4,500.2 L513.0,494.7 L513.7,492.2 L514.3,505.1 L514.9,487.7 L515.5,497.2 L516.1,499.3 L516.7,497.0 L517.4,502.6 L518.0,505.2 L518.6,504.7 L519.2,484.4 L519.8,486.5 L520.4,482.4 L521.0,496.7 L521.7,534.5 L522.3,490.2 L522.9,494.1 L523.5,505.4 L524.1,499.6 L524.7,502.3 L525.3,497.7 L526.0,496.1 L526.6,497.8 L527.2,488.0 L527.8,485.8 L528.4,492.5 L529.0,495.8 L529.7,506.0 L530.3,490.6 L530.9,487.1 L531.5,491.2 L532.1,479.4 L532.7,510.0 L533.3,496.6 L534.0,488.1 L534.6,518.4 L535.2,491.5 L535.8,501.1 L536.4,489.7 L537.0,485.2 L537.7,494.6 L538.3,480.9 L538.9,482.4 L539.5,491.5 L540.1,534.9 L540.7,490.1 L541.3,502.1 L542.0,490.9 L542.6,498.6 L543.2,499.2 L543.8,506.3 L544.4,491.8 L545.0,504.5 L545.7,510.9 L546.3,499.7 L546.9,506.1 L547.5,491.2 L548.1,498.2 L548.7,495.7 L549.3,519.8 L550.0,519.5 L550.6,507.5 L551.2,487.3 L551.8,512.3 L552.4,515.7 L553.0,494.3 L553.7,512.5 L554.3,504.2 L554.9,490.5 L555.5,491.4 L556.1,485.6 L556.7,484.9 L557.3,491.7 L558.0,501.4 L558.6,501.1 L559.2,486.4 L559.8,497.8 L560.4,500.0 L561.0,489.2 L561.6,497.8 L562.3,501.9 L562.9,508.0 L563.5,500.6 L564.1,516.6 L564.7,496.1 L565.3,501.5 L566.0,496.4 L566.6,493.8 L567.2,493.0 L567.8,503.7 L568.4,503.7 L569.0,524.6 L569.6,506.3 L570.3,500.4 L570.9,499.0 L571.5,498.1 L572.1,484.3 L572.7,488.9 L573.3,503.3 L574.0,501.6 L574.6,516.9 L575.2,501.6 L575.8,479.4 L576.4,501.9 L577.0,506.5 L577.6,485.4 L578.3,515.6 L578.9,496.2 L579.5,499.9 L580.1,496.1 L580.7,494.1 L581.3,499.5 L582.0,494.1 L582.6,507.7 L583.2,495.1 L583.8,527.5 L584.4,498.1 L585.0,505.1 L585.6,497.0 L586.3,498.7 L586.9,493.1 L587.5,481.6 L588.1,540.7 L588.7,494.7 L589.3,511.8 L590.0,493.6 L590.6,502.6 L591.2,493.3 L591.8,493.5 L592.4,494.3 L593.0,495.6 L593.6,495.2 L594.3,488.5 L594.9,506.7 L595.5,487.7 L596.1,490.2 L596.7,511.7 L597.3,500.6 L597.9,507.3 L598.6,505.0 L599.2,483.7 L599.8,490.8 L600.4,494.2 L601.0,505.3 L601.6,496.3 L602.3,501.1 L602.9,491.6 L603.5,506.6 L604.1,517.8 L604.7,504.7 L605.3,498.9 L605.9,495.9 L606.6,517.7 L607.2,500.3 L607.8,487.7 L608.4,496.2 L609.0,493.3 L609.6,488.8 L610.3,501.1 L610.9,489.3 L611.5,488.5 L612.1,503.9 L612.7,485.9 L613.3,516.8 L613.9,503.3 L614.6,508.3 L615.2,485.6 L615.8,489.6 L616.4,485.6 L617.0,493.7 L617.6,509.5 L618.3,491.4 L618.9,486.0 L619.5,488.3 L620.1,484.9 L620.7,490.2 L621.3,489.0 L621.9,493.8 L622.6,498.8 L623.2,503.7 L623.8,495.3 L624.4,526.2 L625.0,494.3 L625.6,506.6 L626.3,501.9 L626.9,505.5 L627.5,479.6 L628.1,506.0 L628.7,494.2 L629.3,497.8 L629.9,499.8 L630.6,482.5 L631.2,502.6 L631.8,499.0 L632.4,495.1 L633.0,490.7 L633.6,486.1 L634.3,504.8 L634.9,479.4 L635.5,502.7 L636.1,510.3 L636.7,519.1 L637.3,506.2 L637.9,504.2 L638.6,492.2 L639.2,497.3 L639.8,508.5 L640.4,507.5 L641.0,493.9 L641.6,501.8 L642.2,499.1 L642.9,537.9 L643.5,498.4 L644.1,513.4 L644.7,525.3 L645.3,507.0 L645.9,517.6 L646.6,492.9 L647.2,495.7 L647.8,502.0 L648.4,501.5 L649.0,512.0 L649.6,493.4 L650.2,507.9 L650.9,518.5 L651.5,494.3 L652.1,516.4 L652.7,500.9 L653.3,503.5 L653.9,493.1 L654.6,507.4 L655.2,512.6 L655.8,494.8 L656.4,489.2 L657.0,506.2 L657.6,499.6 L658.2,499.6 L658.9,507.3 L659.5,493.9 L660.1,488.0 L660.7,487.3 L661.3,505.9 L661.9,511.6 L662.6,519.9 L663.2,496.3 L663.8,494.6 L664.4,484.9 L665.0,490.2 L665.6,531.6 L666.2,519.7 L666.9,499.9 L667.5,480.8 L668.1,485.7 L668.7,509.4 L669.3,490.1 L669.9,505.6 L670.6,488.1 L671.2,486.5 L671.8,514.6 L672.4,496.8 L673.0,501.0 L673.6,500.3 L674.2,506.7 L674.9,498.5 L675.5,488.6 L676.1,496.9 L676.7,501.9 L677.3,490.0 L677.9,505.8 L678.5,487.7 L679.2,495.1 L679.8,504.8 L680.4,511.1 L681.0,507.7 L681.6,494.7 L682.2,486.4 L682.9,500.0 L683.5,496.5 L684.1,484.7 L684.7,506.0 L685.3,504.7 L685.9,527.4 L686.5,508.8 L687.2,495.9 L687.8,490.3 L688.4,513.4 L689.0,517.8 L689.6,499.3 L690.2,494.3 L690.9,493.5 L691.5,506.5 L692.1,487.2 L692.7,502.8 L693.3,505.4 L693.9,504.6 L694.5,486.5 L695.2,499.1 L695.8,514.4 L696.4,515.1 L697.0,516.4 L697.6,497.3 L698.2,485.0 L698.9,509.1 L699.5,510.7 L700.1,492.6 L700.7,493.1" stroke="rgba(0,0,0,0.1)" stroke-width="1.5"/>
<path d="M71.0,416.9 L71.6,423.1 L72.2,429.2 L72.8,416.9 L73.5,398.5 L74.1,367.9 L74.7,184.2 L75.3,361.8 L75.9,410.8 L76.5,435.3 L77.2,493.0 L77.8,392.7 L78.4,501.3 L79.0,493.5 L79.6,477.8 L80.2,503.1 L80.8,487.1 L81.5,427.7 L82.1,517.5 L82.7,501.8 L83.3,484.1 L83.9,487.5 L84.5,498.5 L85.2,398.8 L85.8,511.7 L86.4,500.0 L87.0,510.2 L87.6,479.6 L88.2,494.5 L88.8,422.4 L89.5,504.2 L90.1,494.3 L90.7,485.6 L91.3,477.8 L91.9,390.2 L92.5,484.3 L93.1,520.5 L93.8,518.6 L94.4,494.3 L95.0,500.4 L95.6,388.3 L96.2,502.0 L96.8,492.2 L97.5,489.8 L98.1,488.0 L98.7,495.7 L99.3,417.9 L99.9,487.0 L100.5,489.8 L101.1,477.8 L101.8,539.0 L102.4,489.8 L103.0,413.3 L103.6,492.2 L104.2,504.4 L104.8,497.6 L105.5,490.3 L106.1,425.6 L106.7,493.0 L107.3,518.9 L107.9,495.9 L108.5,504.9 L109.1,506.3 L109.8,444.6 L110.4,511.9 L111.0,487.2 L111.6,492.1 L112.2,497.5 L112.8,493.8 L113.5,391.8 L114.1,487.9 L114.7,499.5 L115.3,501.1 L115.9,505.5 L116.5,504.1 L117.1,419.1 L117.8,498.1 L118.4,518.8 L119.0,495.9 L119.6,495.3 L120.2,423.3 L120.8,503.0 L121.5,491.4 L122.1,482.6 L122.7,500.4 L123.3,492.7 L123.9,427.1 L124.5,504.8 L125.1,489.9 L125.8,498.5 L126.4,515.2 L127.0,507.4 L127.6,441.6 L128.2,512.0 L128.8,489.0 L129.4,493.3 L130.1,491.9 L130.7,515.3 L131.3,421.4 L131.9,502.8 L132.5,497.7 L133.1,526.8 L133.8,498.8 L134.4,477.8 L135.0,498.8 L135.6,486.3 L136.2,482.9 L136.8,477.8 L137.4,497.2 L138.1,412.6 L138.7,488.4 L139.3,491.7 L139.9,478.5 L140.5,477.8 L141.1,484.0 L141.8,428.7 L142.4,503.2 L143.0,484.1 L143.6,507.2 L144.2,518.0 L144.8,509.0 L145.4,436.5 L146.1,493.7 L146.7,504.1 L147.3,496.4 L147.9,500.7 L148.5,411.4 L149.1,506.5 L149.8,516.6 L150.4,501.4 L151.0,484.3 L151.6,501.4 L152.2,423.1 L152.8,508.5 L153.4,502.2 L154.1,498.7 L154.7,508.2 L155.3,484.7 L155.9,420.7 L156.5,494.8 L157.1,489.6 L157.8,501.6 L158.4,512.3 L159.0,494.6 L159.6,438.1 L160.2,480.7 L160.8,498.8 L161.4,497.6 L162.1,482.3 L162.7,432.1 L163.3,499.9 L163.9,491.0 L164.5,502.1 L165.1,490.4 L165.8,486.6 L166.4,427.0 L167.0,492.5 L167.6,505.3 L168.2,520.6 L168.8,502.2 L169.4,504.8 L170.1,460.1 L170.7,510.7 L171.3,484.8 L171.9,501.9 L172.5,487.2 L173.1,489.2 L173.7,459.6 L174.4,492.1 L175.0,499.9 L175.6,486.7 L176.2,487.0 L176.8,440.8 L177.4,480.4 L178.1,505.4 L178.7,481.1 L179.3,495.6 L179.9,501.2 L180.5,488.9 L181.1,483.9 L181.7,510.6 L182.4,524.5 L183.0,499.3 L183.6,494.8 L184.2,462.2 L184.8,495.6 L185.4,498.9 L186.1,534.2 L186.7,508.7 L187.3,504.0 L187.9,442.1 L188.5,497.2 L189.1,509.7 L189.7,494.3 L190.4,508.1 L191.0,434.9 L191.6,508.9 L192.2,499.9 L192.8,477.8 L193.4,502.1 L194.1,499.4 L194.7,481.6 L195.3,506.1 L195.9,490.3 L196.5,495.7 L197.1,501.8 L197.7,496.3 L198.4,432.9 L199.0,496.3 L199.6,487.6 L200.2,496.4 L200.8,511.6 L201.4,487.1 L202.1,478.5 L202.7,486.9 L203.3,490.9 L203.9,484.5 L204.5,494.1 L205.1,463.9 L205.7,516.3 L206.4,492.9 L207.0,484.9 L207.6,497.3 L208.2,493.4 L208.8,461.6 L209.4,492.9 L210.0,493.8 L210.7,494.4 L211.3,491.9 L211.9,491.5 L212.5,425.0 L213.1,486.9 L213.7,498.1 L214.4,489.7 L215.0,499.1 L215.6,486.0 L216.2,470.4 L216.8,486.3 L217.4,504.8 L218.0,490.0 L218.7,491.3 L219.3,431.1 L219.9,505.0 L220.5,506.7 L221.1,495.5 L221.7,486.9 L222.4,503.1 L223.0,484.0 L223.6,504.1 L224.2,514.6 L224.8,482.3 L225.4,484.2 L226.0,496.4 L226.7,438.8 L227.3,508.2 L227.9,503.7 L228.5,496.5 L229.1,491.9 L229.7,483.7 L230.4,455.2 L231.0,493.7 L231.6,477.8 L232.2,499.6 L232.8,499.6 L233.4,438.2 L234.0,504.4 L234.7,494.8 L235.3,503.1 L235.9,484.9 L236.5,507.5 L237.1,494.5 L237.7,488.2 L238.4,513.2 L239.0,501.2 L239.6,490.2 L240.2,479.3 L240.8,483.0 L241.4,493.5 L242.0,510.5 L242.7,497.5 L243.3,491.6 L243.9,489.4 L244.5,474.3 L245.1,498.0 L245.7,495.1 L246.3,500.8 L247.0,516.3 L247.6,478.2 L248.2,513.2 L248.8,501.7 L249.4,507.3 L250.0,495.3 L250.7,493.8 L251.3,453.7 L251.9,508.6 L252.5,486.7 L253.1,494.5 L253.7,494.2 L254.3,509.5 L255.0,468.8 L255.6,486.7 L256.2,482.5 L256.8,501.6 L257.4,507.0 L258.0,487.3 L258.7,472.3 L259.3,487.4 L259.9,508.8 L260.5,506.8 L261.1,498.0 L261.7,426.7 L262.3,481.3 L263.0,486.7 L263.6,491.8 L264.2,526.9 L264.8,482.9 L265.4,463.5 L266.0,492.1 L266.7,506.2 L267.3,487.9 L267.9,479.1 L268.5,499.5 L269.1,457.7 L269.7,486.4 L270.3,512.5 L271.0,504.9 L271.6,501.4 L272.2,486.0 L272.8,494.0 L273.4,484.7 L274.0,484.1 L274.7,502.6 L275.3,495.7 L275.9,458.1 L276.5,501.2 L277.1,501.8 L277.7,516.2 L278.3,507.0 L279.0,494.2 L279.6,490.5 L280.2,510.4 L280.8,500.2 L281.4,481.1 L282.0,502.8 L282.6,493.6 L283.3,455.6 L283.9,494.5 L284.5,507.9 L285.1,486.8 L285.7,498.7 L286.3,509.8 L287.0,502.9 L287.6,511.3 L288.2,516.5 L288.8,500.5 L289.4,498.6 L290.0,480.1 L290.6,484.2 L291.3,494.2 L291.9,497.7 L292.5,490.8 L293.1,514.8 L293.7,477.8 L294.3,503.8 L295.0,490.8 L295.6,488.2 L296.2,504.0 L296.8,502.3 L297.4,461.8 L298.0,485.9 L298.6,500.2 L299.3,496.6 L299.9,494.8 L300.5,492.4 L301.1,511.0 L301.7,483.9 L302.3,480.5 L303.0,509.2 L303.6,500.4 L304.2,466.5 L304.8,482.8 L305.4,498.1 L306.0,496.3 L306.6,499.0 L307.3,508.8 L307.9,478.5 L308.5,511.6 L309.1,501.9 L309.7,491.6 L310.3,505.4 L311.0,515.3 L311.6,453.7 L312.2,486.8 L312.8,492.2 L313.4,508.1 L314.0,484.9 L314.6,488.3 L315.3,490.2 L315.9,481.1 L316.5,496.1 L317.1,487.0 L317.7,486.5 L318.3,424.3 L319.0,500.9 L319.6,500.0 L320.2,498.8 L320.8,500.2 L321.4,484.9 L322.0,483.8 L322.6,497.9 L323.3,510.0 L323.9,513.4 L324.5,480.0 L325.1,510.0 L325.7,469.6 L326.3,479.0 L326.9,491.7 L327.6,508.5 L328.2,494.2 L328.8,497.3 L329.4,503.9 L330.0,499.7 L330.6,485.9 L331.3,493.5 L331.9,491.1 L332.5,464.3 L333.1,501.9 L333.7,491.7 L334.3,485.9 L334.9,497.9 L335.6,521.2 L336.2,483.7 L336.8,500.8 L337.4,493.2 L338.0,507.8 L338.6,510.3 L339.3,486.3 L339.9,466.9 L340.5,495.4 L341.1,486.8 L341.7,500.8 L342.3,503.7 L342.9,478.9 L343.6,504.5 L344.2,538.5 L344.8,500.3 L345.4,484.1 L346.0,500.8 L346.6,443.2 L347.3,499.8 L347.9,488.8 L348.5,504.7 L349.1,515.7 L349.7,500.2 L350.3,492.7 L350.9,513.8 L351.6,497.0 L352.2,502.2 L352.8,494.4 L353.4,498.3 L354.0,461.9 L354.6,489.6 L355.3,496.2 L355.9,492.9 L356.5,509.7 L357.1,495.6 L357.7,510.4 L358.3,492.7 L358.9,497.2 L359.6,497.5 L360.2,513.8 L360.8,449.3 L361.4,495.2 L362.0,494.9 L362.6,490.7 L363.2,488.4 L363.9,508.9 L364.5,476.8 L365.1,499.7 L365.7,510.9 L366.3,517.1 L366.9,490.6 L367.6,498.8 L368.2,455.3 L368.8,524.7 L369.4,491.6 L370.0,490.1 L370.6,513.3 L371.2,494.1 L371.9,497.9 L372.5,490.8 L373.1,504.5 L373.7,490.2 L374.3,489.4 L374.9,484.1 L375.6,489.0 L376.2,480.5 L376.8,510.2 L377.4,477.8 L378.0,486.8 L378.6,511.8 L379.2,506.3 L379.9,499.2 L380.5,500.0 L381.1,498.8 L381.7,494.3 L382.3,446.4 L382.9,510.0 L383.6,488.9 L384.2,500.5 L384.8,496.0 L385.4,480.6 L386.0,503.1 L386.6,489.1 L387.2,494.7 L387.9,501.9 L388.5,501.6 L389.1,445.1 L389.7,500.6 L390.3,494.8 L390.9,483.5 L391.6,509.9 L392.2,491.6 L392.8,499.0 L393.4,489.8 L394.0,496.2 L394.6,528.8 L395.2,516.8 L395.9,495.6 L396.5,461.8 L397.1,506.2 L397.7,504.0 L398.3,491.0 L398.9,501.3 L399.5,488.9 L400.2,484.1 L400.8,503.2 L401.4,497.8 L402.0,492.9 L402.6,518.1 L403.2,412.9 L403.9,491.6 L404.5,498.4 L405.1,497.1 L405.7,500.8 L406.3,496.0 L406.9,486.1 L407.5,514.9 L408.2,492.1 L408.8,492.5 L409.4,503.8 L410.0,505.3 L410.6,453.5 L411.2,500.7 L411.9,489.5 L412.5,492.9 L413.1,486.8 L413.7,475.4 L414.3,498.9 L414.9,508.7 L415.5,494.0 L416.2,498.0 L416.8,500.8 L417.4,465.6 L418.0,531.8 L418.6,484.8 L419.2,504.0 L419.9,507.6 L420.5,483.2 L421.1,492.0 L421.7,490.9 L422.3,504.7 L422.9,478.7 L423.5,497.4 L424.2,499.3 L424.8,457.8 L425.4,482.9 L426.0,504.0 L426.6,490.9 L427.2,502.1 L427.9,486.8 L428.5,503.1 L429.1,498.2 L429.7,500.6 L430.3,506.5 L430.9,481.6 L431.5,464.0 L432.2,492.5 L432.8,488.6 L433.4,497.8 L434.0,488.8 L434.6,497.1 L435.2,472.3 L435.8,496.8 L436.5,494.0 L437.1,520.4 L437.7,504.3 L438.3,503.2 L438.9,450.0 L439.5,488.1 L440.2,498.3 L440.8,519.8 L441.4,492.6 L442.0,485.6 L442.6,491.7 L443.2,507.9 L443.8,505.4 L444.5,498.0 L445.1,525.4 L445.7,493.3 L446.3,489.9 L446.9,500.1 L447.5,496.7 L448.2,498.9 L448.8,505.5 L449.4,489.6 L450.0,515.9 L450.6,490.2 L451.2,487.9 L451.8,490.3 L452.5,517.7 L453.1,484.1 L453.7,491.1 L454.3,496.5 L454.9,500.2 L455.5,489.5 L456.2,494.4 L456.8,531.0 L457.4,491.4 L458.0,497.5 L458.6,496.8 L459.2,505.5 L459.8,502.0 L460.5,498.2 L461.1,498.4 L461.7,511.9 L462.3,499.0 L462.9,497.0 L463.5,506.6 L464.2,505.3 L464.8,487.1 L465.4,493.0 L466.0,486.2 L466.6,493.2 L467.2,493.6 L467.8,513.2 L468.5,489.2 L469.1,484.2 L469.7,496.5 L470.3,504.5 L470.9,498.8 L471.5,508.1 L472.2,501.6 L472.8,507.2 L473.4,485.8 L474.0,516.8 L474.6,503.6 L475.2,498.4 L475.8,487.7 L476.5,494.7 L477.1,501.8 L477.7,484.2 L478.3,486.3 L478.9,503.4 L479.5,512.7 L480.1,509.1 L480.8,484.5 L481.4,510.5 L482.0,506.0 L482.6,534.8 L483.2,496.1 L483.8,495.1 L484.5,492.2 L485.1,492.5 L485.7,503.6 L486.3,504.4 L486.9,485.2 L487.5,493.8 L488.1,498.0 L488.8,482.9 L489.4,505.2 L490.0,492.3 L490.6,489.3 L491.2,512.5 L491.8,495.5 L492.5,490.4 L493.1,512.6 L493.7,515.1 L494.3,484.5 L494.9,482.7 L495.5,536.5 L496.1,493.6 L496.8,492.9 L497.4,508.3 L498.0,489.3 L498.6,496.6 L499.2,495.6 L499.8,505.3 L500.5,507.5 L501.1,500.8 L501.7,489.4 L502.3,506.6 L502.9,493.3 L503.5,502.8 L504.1,498.9 L504.8,489.3 L505.4,498.0 L506.0,494.2 L506.6,512.1 L507.2,489.6 L507.8,503.8 L508.5,500.3 L509.1,492.9 L509.7,512.0 L510.3,505.1 L510.9,498.9 L511.5,499.9 L512.1,498.5 L512.8,493.1 L513.4,490.6 L514.0,503.5 L514.6,486.1 L515.2,495.6 L515.8,497.6 L516.4,495.3 L517.1,501.0 L517.7,503.6 L518.3,503.0 L518.9,482.8 L519.5,484.9 L520.1,480.8 L520.8,495.1 L521.4,532.9 L522.0,488.6 L522.6,492.4 L523.2,503.8 L523.8,498.0 L524.4,500.7 L525.1,496.1 L525.7,494.5 L526.3,496.1 L526.9,486.4 L527.5,484.2 L528.1,490.8 L528.8,494.1 L529.4,504.4 L530.0,489.0 L530.6,485.5 L531.2,489.5 L531.8,477.8 L532.4,508.4 L533.1,495.0 L533.7,486.4 L534.3,516.7 L534.9,489.8 L535.5,499.5 L536.1,488.1 L536.8,483.6 L537.4,493.0 L538.0,479.2 L538.6,480.8 L539.2,489.8 L539.8,533.3 L540.4,488.5 L541.1,500.5 L541.7,489.3 L542.3,497.0 L542.9,497.5 L543.5,504.7 L544.1,490.2 L544.8,502.8 L545.4,509.3 L546.0,498.1 L546.6,504.5 L547.2,489.6 L547.8,496.6 L548.4,494.1 L549.1,518.1 L549.7,517.9 L550.3,505.9 L550.9,485.7 L551.5,510.7 L552.1,514.1 L552.7,492.7 L553.4,510.9 L554.0,502.5 L554.6,488.8 L555.2,489.8 L555.8,484.0 L556.4,483.3 L557.1,490.1 L557.7,499.8 L558.3,499.5 L558.9,484.7 L559.5,496.2 L560.1,498.4 L560.7,487.6 L561.4,496.2 L562.0,500.3 L562.6,506.4 L563.2,498.9 L563.8,515.0 L564.4,494.5 L565.1,499.9 L565.7,494.8 L566.3,492.2 L566.9,491.4 L567.5,502.1 L568.1,502.1 L568.7,522.9 L569.4,504.7 L570.0,498.8 L570.6,497.4 L571.2,496.4 L571.8,482.7 L572.4,487.3 L573.1,501.7 L573.7,500.0 L574.3,515.3 L574.9,500.0 L575.5,477.8 L576.1,500.3 L576.7,504.9 L577.4,483.8 L578.0,514.0 L578.6,494.6 L579.2,498.3 L579.8,494.5 L580.4,492.5 L581.1,497.8 L581.7,492.4 L582.3,506.1 L582.9,493.5 L583.5,525.9 L584.1,496.5 L584.7,503.4 L585.4,495.4 L586.0,497.1 L586.6,491.5 L587.2,480.0 L587.8,539.1 L588.4,493.1 L589.0,510.2 L589.7,492.0 L590.3,500.9 L590.9,491.7 L591.5,491.8 L592.1,492.7 L592.7,494.0 L593.4,493.5 L594.0,486.9 L594.6,505.1 L595.2,486.1 L595.8,488.5 L596.4,510.1 L597.0,499.0 L597.7,505.7 L598.3,503.4 L598.9,482.1 L599.5,489.2 L600.1,492.6 L600.7,503.7 L601.4,494.6 L602.0,499.5 L602.6,489.9 L603.2,505.0 L603.8,516.2 L604.4,503.1 L605.0,497.3 L605.7,494.3 L606.3,516.0 L606.9,498.7 L607.5,486.1 L608.1,494.6 L608.7,491.7 L609.4,487.2 L610.0,499.5 L610.6,487.6 L611.2,486.8 L611.8,502.3 L612.4,484.3 L613.0,515.2 L613.7,501.7 L614.3,506.7 L614.9,483.9 L615.5,487.9 L616.1,484.0 L616.7,492.1 L617.4,507.8 L618.0,489.7 L618.6,484.4 L619.2,486.7 L619.8,483.3 L620.4,488.6 L621.0,487.4 L621.7,492.2 L622.3,497.2 L622.9,502.1 L623.5,493.7 L624.1,524.6 L624.7,492.7 L625.4,505.0 L626.0,500.3 L626.6,503.9 L627.2,478.0 L627.8,504.3 L628.4,492.6 L629.0,496.2 L629.7,498.1 L630.3,480.9 L630.9,501.0 L631.5,497.3 L632.1,493.5 L632.7,489.1 L633.3,484.5 L634.0,503.1 L634.6,477.8 L635.2,501.1 L635.8,508.7 L636.4,517.5 L637.0,504.5 L637.7,502.6 L638.3,490.5 L638.9,495.7 L639.5,506.9 L640.1,505.9 L640.7,492.2 L641.3,500.2 L642.0,497.4 L642.6,536.2 L643.2,496.8 L643.8,511.8 L644.4,523.7 L645.0,505.4 L645.7,516.0 L646.3,491.2 L646.9,494.1 L647.5,500.4 L648.1,499.8 L648.7,510.4 L649.3,491.8 L650.0,506.3 L650.6,516.9 L651.2,492.7 L651.8,514.8 L652.4,499.3 L653.0,501.9 L653.7,491.5 L654.3,505.7 L654.9,511.0 L655.5,493.1 L656.1,487.6 L656.7,504.6 L657.3,498.0 L658.0,498.0 L658.6,505.6 L659.2,492.3 L659.8,486.4 L660.4,485.7 L661.0,504.3 L661.7,510.0 L662.3,518.3 L662.9,494.7 L663.5,493.0 L664.1,483.3 L664.7,488.6 L665.3,530.0 L666.0,518.1 L666.6,498.2 L667.2,479.2 L667.8,484.1 L668.4,507.8 L669.0,488.5 L669.6,503.9 L670.3,486.5 L670.9,484.9 L671.5,513.0 L672.1,495.2 L672.7,499.4 L673.3,498.6 L674.0,505.1 L674.6,496.9 L675.2,487.0 L675.8,495.3 L676.4,500.2 L677.0,488.4 L677.6,504.2 L678.3,486.0 L678.9,493.5 L679.5,503.2 L680.1,509.4 L680.7,506.0 L681.3,493.1 L682.0,484.8 L682.6,498.4 L683.2,494.9 L683.8,483.1 L684.4,504.4 L685.0,503.1 L685.6,525.8 L686.3,507.1 L686.9,494.2 L687.5,488.7 L688.1,511.8 L688.7,516.2 L689.3,497.7 L690.0,492.7 L690.6,491.9 L691.2,504.9 L691.8,485.6 L692.4,501.1 L693.0,503.8 L693.6,503.0 L694.3,484.8 L694.9,497.4 L695.5,512.7 L696.1,513.5 L696.7,514.8 L697.3,495.7 L698.0,483.3 L698.6,507.5 L699.2,509.1 L699.8,490.9 L700.4,491.5" stroke="#d33434" stroke-width="1.8"/>
</g>
<g font-family="Liberation Sans" font-size="12" fill="#545454">
<rect x="538.5" y="112.5" width="13" height="13" fill="none" stroke="#ccc"/><rect x="540" y="114" width="10" height="10" fill="#2f6fb1"/>
<text x="554.5" y="124">Channel 1</text>
<rect x="627.5" y="112.5" width="13" height="13" fill="none" stroke="#ccc"/><rect x="629" y="114" width="10" height="10" fill="#d42b2b"/>
<text x="643.5" y="124">Channel 2</text>
</g>
</svg>
<svg width="1135" height="852" viewBox="0 0 1135 852" style="position:absolute;left:0;top:0">
<defs><filter id="tx" x="0" y="0" width="100%" height="100%"><feTurbulence type="fractalNoise" baseFrequency="0.35" numOctaves="2" seed="3"/><feColorMatrix values="0 0 0 0 0.2  0 0 0 0 0.35  0 0 0 0 1  0 0 0 1.6 -0.75"/></filter><filter id="bl" x="-1%" y="-5%" width="102%" height="110%"><feGaussianBlur stdDeviation="0.45"/></filter></defs><g filter="url(#bl)">
<rect x="68" y="606" width="635" height="71" fill="#0b22ee"/>
<rect x="68" y="677" width="635" height="29" fill="#000080"/>
<rect x="71.0" y="606" width="1.2" height="71" fill="#30b8ff" fill-opacity="0.85"/>
<rect x="74.5" y="606" width="1.2" height="71" fill="#30b8ff" fill-opacity="0.85"/>
<rect x="78.1" y="606" width="1.2" height="71" fill="#30b8ff" fill-opacity="0.85"/>
<rect x="81.7" y="606" width="1.2" height="71" fill="#30b8ff" fill-opacity="0.85"/>
<rect x="85.2" y="606" width="1.2" height="71" fill="#30b8ff" fill-opacity="0.67"/>
<rect x="88.8" y="606" width="1.2" height="71" fill="#30b8ff" fill-opacity="0.85"/>
<rect x="92.4" y="606" width="1.2" height="71" fill="#30b8ff" fill-opacity="0.76"/>
<rect x="95.9" y="606" width="1.2" height="71" fill="#30b8ff" fill-opacity="0.62"/>
<rect x="99.5" y="606" width="1.2" height="71" fill="#30b8ff" fill-opacity="0.71"/>
<rect x="103.1" y="606" width="1.2" height="71" fill="#30b8ff" fill-opacity="0.74"/>
<rect x="106.6" y="606" width="1.2" height="71" fill="#30b8ff" fill-opacity="0.60"/>
<rect x="110.2" y="606" width="1.2" height="71" fill="#3a8cff" fill-opacity="0.85"/>
<rect x="113.8" y="606" width="1.2" height="71" fill="#3a8cff" fill-opacity="0.45"/>
<rect x="117.3" y="606" width="1.2" height="71" fill="#3a8cff" fill-opacity="0.65"/>
<rect x="120.9" y="606" width="1.2" height="71" fill="#3a8cff" fill-opacity="0.26"/>
<rect x="124.5" y="606" width="1.2" height="71" fill="#3a8cff" fill-opacity="0.69"/>
<rect x="131.6" y="606" width="1.2" height="71" fill="#3a8cff" fill-opacity="0.58"/>
<rect x="135.2" y="606" width="1.2" height="71" fill="#3a8cff" fill-opacity="0.34"/>
<rect x="138.7" y="606" width="1.2" height="71" fill="#3a8cff" fill-opacity="0.59"/>
<rect x="145.9" y="606" width="1.2" height="71" fill="#3a8cff" fill-opacity="0.82"/>
<rect x="149.4" y="606" width="1.2" height="71" fill="#3a8cff" fill-opacity="0.29"/>
<rect x="153.0" y="606" width="1.2" height="71" fill="#3a8cff" fill-opacity="0.79"/>
<rect x="156.6" y="606" width="1.2" height="71" fill="#3a8cff" fill-opacity="0.28"/>
<rect x="160.1" y="606" width="1.2" height="71" fill="#3a8cff" fill-opacity="0.80"/>
<rect x="167.3" y="606" width="1.2" height="71" fill="#3a8cff" fill-opacity="0.51"/>
<rect x="174.4" y="606" width="1.2" height="71" fill="#3a8cff" fill-opacity="0.65"/>
<rect x="178.0" y="606" width="1.2" height="71" fill="#3a8cff" fill-opacity="0.30"/>
<rect x="181.5" y="606" width="1.2" height="71" fill="#3a8cff" fill-opacity="0.60"/>
<rect x="185.1" y="606" width="1.2" height="71" fill="#3a8cff" fill-opacity="0.34"/>
<rect x="188.7" y="606" width="1.2" height="71" fill="#3a8cff" fill-opacity="0.63"/>
<rect x="192.2" y="606" width="1.2" height="71" fill="#3a8cff" fill-opacity="0.36"/>
<rect x="195.8" y="606" width="1.2" height="71" fill="#3a8cff" fill-opacity="0.59"/>
<rect x="202.9" y="606" width="1.2" height="71" fill="#3a8cff" fill-opacity="0.58"/>
<rect x="210.1" y="606" width="1.2" height="71" fill="#3a8cff" fill-opacity="0.52"/>
<rect x="217.2" y="606" width="1.2" height="71" fill="#3a8cff" fill-opacity="0.72"/>
<rect x="220.8" y="606" width="1.2" height="71" fill="#3a8cff" fill-opacity="0.50"/>
<rect x="224.3" y="606" width="1.2" height="71" fill="#3a8cff" fill-opacity="0.49"/>
<rect x="227.9" y="606" width="1.2" height="71" fill="#3a8cff" fill-opacity="0.55"/>
<rect x="231.5" y="606" width="1.2" height="71" fill="#3a8cff" fill-opacity="0.39"/>
<rect x="238.6" y="606" width="1.2" height="71" fill="#3a8cff" fill-opacity="0.53"/>
<rect x="242.2" y="606" width="1.2" height="71" fill="#3a8cff" fill-opacity="0.43"/>
<rect x="245.7" y="606" width="1.2" height="71" fill="#3a8cff" fill-opacity="0.67"/>
<rect x="249.3" y="606" width="1.2" height="71" fill="#3a8cff" fill-opacity="0.47"/>
<rect x="252.9" y="606" width="1.2" height="71" fill="#3a8cff" fill-opacity="0.65"/>
<rect x="256.4" y="606" width="1.2" height="71" fill="#3a8cff" fill-opacity="0.49"/>
<rect x="260.0" y="606" width="1.2" height="71" fill="#3a8cff" fill-opacity="0.78"/>
<rect x="263.6" y="606" width="1.2" height="71" fill="#3a8cff" fill-opacity="0.58"/>
<rect x="267.1" y="606" width="1.2" height="71" fill="#3a8cff" fill-opacity="0.52"/>
<rect x="270.7" y="606" width="1.2" height="71" fill="#3a8cff" fill-opacity="0.36"/>
<rect x="274.3" y="606" width="1.2" height="71" fill="#3a8cff" fill-opacity="0.59"/>
<rect x="277.8" y="606" width="1.2" height="71" fill="#3a8cff" fill-opacity="0.38"/>
<rect x="281.4" y="606" width="1.2" height="71" fill="#3a8cff" fill-opacity="0.49"/>
<rect x="285.0" y="606" width="1.2" height="71" fill="#3a8cff" fill-opacity="0.31"/>
<rect x="288.5" y="606" width="1.2" height="71" fill="#3a8cff" fill-opacity="0.43"/>
<rect x="292.1" y="606" width="1.2" height="71" fill="#3a8cff" fill-opacity="0.42"/>
<rect x="295.7" y="606" width="1.2" height="71" fill="#3a8cff" fill-opacity="0.54"/>
<rect x="302.8" y="606" width="1.2" height="71" fill="#3a8cff" fill-opacity="0.43"/>
<rect x="306.4" y="606" width="1.2" height="71" fill="#3a8cff" fill-opacity="0.31"/>
<rect x="309.9" y="606" width="1.2" height="71" fill="#3a8cff" fill-opacity="0.59"/>
<rect x="313.5" y="606" width="1.2" height="71" fill="#3a8cff" fill-opacity="0.34"/>
<rect x="317.1" y="606" width="1.2" height="71" fill="#3a8cff" fill-opacity="0.63"/>
<rect x="320.6" y="606" width="1.2" height="71" fill="#3a8cff" fill-opacity="0.33"/>
<rect x="324.2" y="606" width="1.2" height="71" fill="#3a8cff" fill-opacity="0.65"/>
<rect x="327.8" y="606" width="1.2" height="71" fill="#3a8cff" fill-opacity="0.27"/>
<rect x="331.3" y="606" width="1.2" height="71" fill="#3a8cff" fill-opacity="0.76"/>
<rect x="334.9" y="606" width="1.2" height="71" fill="#3a8cff" fill-opacity="0.44"/>
<rect x="338.5" y="606" width="1.2" height="71" fill="#3a8cff" fill-opacity="0.45"/>
<rect x="342.0" y="606" width="1.2" height="71" fill="#3a8cff" fill-opacity="0.54"/>
<rect x="345.6" y="606" width="1.2" height="71" fill="#3a8cff" fill-opacity="0.54"/>
<rect x="352.7" y="606" width="1.2" height="71" fill="#3a8cff" fill-opacity="0.55"/>
<rect x="359.9" y="606" width="1.2" height="71" fill="#3a8cff" fill-opacity="0.60"/>
<rect x="363.4" y="606" width="1.2" height="71" fill="#3a8cff" fill-opacity="0.38"/>
<rect x="367.0" y="606" width="1.2" height="71" fill="#3a8cff" fill-opacity="0.85"/>
<rect x="370.6" y="606" width="1.2" height="71" fill="#3a8cff" fill-opacity="0.28"/>
<rect x="374.1" y="606" width="1.2" height="71" fill="#3a8cff" fill-opacity="0.56"/>
<rect x="377.7" y="606" width="1.2" height="71" fill="#3a8cff" fill-opacity="0.35"/>
<rect x="381.3" y="606" width="1.2" height="71" fill="#3a8cff" fill-opacity="0.45"/>
<rect x="384.8" y="606" width="1.2" height="71" fill="#3a8cff" fill-opacity="0.61"/>
<rect x="388.4" y="606" width="1.2" height="71" fill="#3a8cff" fill-opacity="0.77"/>
<rect x="392.0" y="606" width="1.2" height="71" fill="#3a8cff" fill-opacity="0.40"/>
<rect x="395.5" y="606" width="1.2" height="71" fill="#3a8cff" fill-opacity="0.58"/>
<rect x="399.1" y="606" width="1.2" height="71" fill="#3a8cff" fill-opacity="0.25"/>
<rect x="402.7" y="606" width="1.2" height="71" fill="#3a8cff" fill-opacity="0.85"/>
<rect x="406.2" y="606" width="1.2" height="71" fill="#3a8cff" fill-opacity="0.33"/>
<rect x="409.8" y="606" width="1.2" height="71" fill="#3a8cff" fill-opacity="0.85"/>
<rect x="413.4" y="606" width="1.2" height="71" fill="#3a8cff" fill-opacity="0.51"/>
<rect x="416.9" y="606" width="1.2" height="71" fill="#3a8cff" fill-opacity="0.65"/>
<rect x="424.1" y="606" width="1.2" height="71" fill="#3a8cff" fill-opacity="0.70"/>
<rect x="427.6" y="606" width="1.2" height="71" fill="#3a8cff" fill-opacity="0.29"/>
<rect x="431.2" y="606" width="1.2" height="71" fill="#3a8cff" fill-opacity="0.44"/>
<rect x="434.8" y="606" width="1.2" height="71" fill="#3a8cff" fill-opacity="0.55"/>
<rect x="438.3" y="606" width="1.2" height="71" fill="#3a8cff" fill-opacity="0.60"/>
<rect x="445.5" y="606" width="1.2" height="71" fill="#3a8cff" fill-opacity="0.31"/>
<rect x="452.6" y="606" width="1.2" height="71" fill="#3a8cff" fill-opacity="0.27"/>
<rect x="451.3" y="606" width="1.2" height="71" fill="#3a8cff" fill-opacity="0.12"/>
<rect x="463.3" y="606" width="1.2" height="71" fill="#3a8cff" fill-opacity="0.15"/>
<rect x="493.3" y="606" width="1.2" height="71" fill="#3a8cff" fill-opacity="0.13"/>
<rect x="517.3" y="606" width="1.2" height="71" fill="#3a8cff" fill-opacity="0.29"/>
<rect x="531.3" y="606" width="1.2" height="71" fill="#3a8cff" fill-opacity="0.33"/>
<rect x="574.3" y="606" width="1.2" height="71" fill="#3a8cff" fill-opacity="0.14"/>
<rect x="592.3" y="606" width="1.2" height="71" fill="#3a8cff" fill-opacity="0.25"/>
<rect x="595.3" y="606" width="1.2" height="71" fill="#3a8cff" fill-opacity="0.24"/>
<rect x="608.3" y="606" width="1.2" height="71" fill="#3a8cff" fill-opacity="0.27"/>
<rect x="637.3" y="606" width="1.2" height="71" fill="#3a8cff" fill-opacity="0.14"/>
<rect x="641.3" y="606" width="1.2" height="71" fill="#3a8cff" fill-opacity="0.16"/>
<rect x="651.3" y="606" width="1.2" height="71" fill="#3a8cff" fill-opacity="0.10"/>
<rect x="665.3" y="606" width="1.2" height="71" fill="#3a8cff" fill-opacity="0.10"/>
<rect x="670.3" y="606" width="1.2" height="71" fill="#3a8cff" fill-opacity="0.19"/>
<rect x="676.3" y="606" width="1.2" height="71" fill="#3a8cff" fill-opacity="0.22"/>
<rect x="682.3" y="606" width="1.2" height="71" fill="#3a8cff" fill-opacity="0.13"/>
<rect x="698.3" y="606" width="1.2" height="71" fill="#3a8cff" fill-opacity="0.12"/>
<rect x="74" y="606" width="629" height="71" fill="#3060ff" filter="url(#tx)" opacity="0.35"/>
<rect x="74" y="622.5" width="629" height="5.5" fill="#0a22e6"/>
<rect x="74" y="628.0" width="629" height="6.3" fill="#0a22e6"/>
<rect x="74" y="641.8" width="629" height="3.0" fill="#0a22e6"/>
<linearGradient id="ga_0" x1="0" x2="1" y1="0" y2="0"><stop offset="0" stop-color="#c8e8c0" stop-opacity="1"/><stop offset="0.2" stop-color="#70d8f0" stop-opacity="1"/><stop offset="1" stop-color="#58d0ff" stop-opacity="1"/></linearGradient>
<rect x="73" y="623.0" width="630" height="2.0" fill="url(#ga_0)"/>
<linearGradient id="ga_1" x1="0" x2="1" y1="0" y2="0"><stop offset="0" stop-color="#101030" stop-opacity="1"/><stop offset="1" stop-color="#0818a0" stop-opacity="0.8"/></linearGradient>
<rect x="73" y="625.3" width="630" height="0.6" fill="url(#ga_1)"/>
<linearGradient id="ga_2" x1="0" x2="1" y1="0" y2="0"><stop offset="0" stop-color="#f8e840" stop-opacity="1"/><stop offset="0.07" stop-color="#e0f050" stop-opacity="1"/><stop offset="0.18" stop-color="#60e8e0" stop-opacity="1"/><stop offset="1" stop-color="#40d0ff" stop-opacity="1"/></linearGradient>
<rect x="73" y="625.9" width="630" height="2.0" fill="url(#ga_2)"/>
<linearGradient id="ga_3" x1="0" x2="1" y1="0" y2="0"><stop offset="0" stop-color="#80e8d0" stop-opacity="1"/><stop offset="0.4" stop-color="#40c8ff" stop-opacity="0.9"/><stop offset="1" stop-color="#40c0ff" stop-opacity="0.35"/></linearGradient>
<rect x="73" y="634.4" width="630" height="1.6" fill="url(#ga_3)"/>
<linearGradient id="ga_4" x1="0" x2="1" y1="0" y2="0"><stop offset="0" stop-color="#f0f050" stop-opacity="1"/><stop offset="0.1" stop-color="#d0f060" stop-opacity="1"/><stop offset="0.25" stop-color="#70e8d0" stop-opacity="1"/><stop offset="1" stop-color="#40d0ff" stop-opacity="1"/></linearGradient>
<rect x="73" y="640.0" width="630" height="2.0" fill="url(#ga_4)"/>
<linearGradient id="ga_5" x1="0" x2="1" y1="0" y2="0"><stop offset="0" stop-color="#e8f8ff" stop-opacity="1"/><stop offset="0.4" stop-color="#60c8ff" stop-opacity="0.8"/><stop offset="1" stop-color="#50b0ff" stop-opacity="0.2"/></linearGradient>
<rect x="73" y="645.0" width="630" height="1.2" fill="url(#ga_5)"/>
<rect x="68" y="606" width="1.5" height="71" fill="#5a3a88"/>
<rect x="69.5" y="606" width="1.5" height="71" fill="#a09ab4"/>
<rect x="71" y="606" width="2" height="71" fill="#44444c"/>
<rect x="73" y="606" width="1" height="71" fill="#90b0d8"/>
<rect x="68" y="622.3" width="5" height="5.4" fill="#c01010"/>
<rect x="68" y="640.0" width="5" height="2.0" fill="#c01010"/>
<rect x="68" y="716" width="635" height="71" fill="#0b22ee"/>
<rect x="68" y="787" width="635" height="29" fill="#000080"/>
<rect x="71.0" y="716" width="1.2" height="71" fill="#30b8ff" fill-opacity="0.85"/>
<rect x="74.5" y="716" width="1.2" height="71" fill="#30b8ff" fill-opacity="0.85"/>
<rect x="78.1" y="716" width="1.2" height="71" fill="#30b8ff" fill-opacity="0.67"/>
<rect x="81.7" y="716" width="1.2" height="71" fill="#30b8ff" fill-opacity="0.85"/>
<rect x="85.2" y="716" width="1.2" height="71" fill="#30b8ff" fill-opacity="0.83"/>
<rect x="88.8" y="716" width="1.2" height="71" fill="#30b8ff" fill-opacity="0.85"/>
<rect x="92.4" y="716" width="1.2" height="71" fill="#30b8ff" fill-opacity="0.85"/>
<rect x="95.9" y="716" width="1.2" height="71" fill="#30b8ff" fill-opacity="0.75"/>
<rect x="99.5" y="716" width="1.2" height="71" fill="#30b8ff" fill-opacity="0.57"/>
<rect x="103.1" y="716" width="1.2" height="71" fill="#30b8ff" fill-opacity="0.55"/>
<rect x="106.6" y="716" width="1.2" height="71" fill="#30b8ff" fill-opacity="0.83"/>
<rect x="110.2" y="716" width="1.2" height="71" fill="#3a8cff" fill-opacity="0.85"/>
<rect x="113.8" y="716" width="1.2" height="71" fill="#3a8cff" fill-opacity="0.48"/>
<rect x="117.3" y="716" width="1.2" height="71" fill="#3a8cff" fill-opacity="0.64"/>
<rect x="120.9" y="716" width="1.2" height="71" fill="#3a8cff" fill-opacity="0.41"/>
<rect x="124.5" y="716" width="1.2" height="71" fill="#3a8cff" fill-opacity="0.58"/>
<rect x="128.0" y="716" width="1.2" height="71" fill="#3a8cff" fill-opacity="0.27"/>
<rect x="131.6" y="716" width="1.2" height="71" fill="#3a8cff" fill-opacity="0.56"/>
<rect x="135.2" y="716" width="1.2" height="71" fill="#3a8cff" fill-opacity="0.48"/>
<rect x="138.7" y="716" width="1.2" height="71" fill="#3a8cff" fill-opacity="0.60"/>
<rect x="145.9" y="716" width="1.2" height="71" fill="#3a8cff" fill-opacity="0.69"/>
<rect x="149.4" y="716" width="1.2" height="71" fill="#3a8cff" fill-opacity="0.28"/>
<rect x="153.0" y="716" width="1.2" height="71" fill="#3a8cff" fill-opacity="0.65"/>
<rect x="160.1" y="716" width="1.2" height="71" fill="#3a8cff" fill-opacity="0.74"/>
<rect x="163.7" y="716" width="1.2" height="71" fill="#3a8cff" fill-opacity="0.40"/>
<rect x="167.3" y="716" width="1.2" height="71" fill="#3a8cff" fill-opacity="0.45"/>
<rect x="174.4" y="716" width="1.2" height="71" fill="#3a8cff" fill-opacity="0.57"/>
<rect x="181.5" y="716" width="1.2" height="71" fill="#3a8cff" fill-opacity="0.48"/>
<rect x="185.1" y="716" width="1.2" height="71" fill="#3a8cff" fill-opacity="0.49"/>
<rect x="188.7" y="716" width="1.2" height="71" fill="#3a8cff" fill-opacity="0.52"/>
<rect x="192.2" y="716" width="1.2" height="71" fill="#3a8cff" fill-opacity="0.27"/>
<rect x="195.8" y="716" width="1.2" height="71" fill="#3a8cff" fill-opacity="0.75"/>
<rect x="202.9" y="716" width="1.2" height="71" fill="#3a8cff" fill-opacity="0.40"/>
<rect x="210.1" y="716" width="1.2" height="71" fill="#3a8cff" fill-opacity="0.54"/>
<rect x="213.6" y="716" width="1.2" height="71" fill="#3a8cff" fill-opacity="0.36"/>
<rect x="217.2" y="716" width="1.2" height="71" fill="#3a8cff" fill-opacity="0.52"/>
<rect x="224.3" y="716" width="1.2" height="71" fill="#3a8cff" fill-opacity="0.55"/>
<rect x="227.9" y="716" width="1.2" height="71" fill="#3a8cff" fill-opacity="0.42"/>
<rect x="231.5" y="716" width="1.2" height="71" fill="#3a8cff" fill-opacity="0.43"/>
<rect x="238.6" y="716" width="1.2" height="71" fill="#3a8cff" fill-opacity="0.49"/>
<rect x="242.2" y="716" width="1.2" height="71" fill="#3a8cff" fill-opacity="0.33"/>
<rect x="245.7" y="716" width="1.2" height="71" fill="#3a8cff" fill-opacity="0.42"/>
<rect x="249.3" y="716" width="1.2" height="71" fill="#3a8cff" fill-opacity="0.57"/>
<rect x="252.9" y="716" width="1.2" height="71" fill="#3a8cff" fill-opacity="0.63"/>
<rect x="256.4" y="716" width="1.2" height="71" fill="#3a8cff" fill-opacity="0.46"/>
<rect x="260.0" y="716" width="1.2" height="71" fill="#3a8cff" fill-opacity="0.43"/>
<rect x="263.6" y="716" width="1.2" height="71" fill="#3a8cff" fill-opacity="0.61"/>
<rect x="267.1" y="716" width="1.2" height="71" fill="#3a8cff" fill-opacity="0.53"/>
<rect x="274.3" y="716" width="1.2" height="71" fill="#3a8cff" fill-opacity="0.62"/>
<rect x="277.8" y="716" width="1.2" height="71" fill="#3a8cff" fill-opacity="0.40"/>
<rect x="281.4" y="716" width="1.2" height="71" fill="#3a8cff" fill-opacity="0.63"/>
<rect x="295.7" y="716" width="1.2" height="71" fill="#3a8cff" fill-opacity="0.44"/>
<rect x="302.8" y="716" width="1.2" height="71" fill="#3a8cff" fill-opacity="0.57"/>
<rect x="306.4" y="716" width="1.2" height="71" fill="#3a8cff" fill-opacity="0.29"/>
<rect x="309.9" y="716" width="1.2" height="71" fill="#3a8cff" fill-opacity="0.54"/>
<rect x="317.1" y="716" width="1.2" height="71" fill="#3a8cff" fill-opacity="0.48"/>
<rect x="320.6" y="716" width="1.2" height="71" fill="#3a8cff" fill-opacity="0.42"/>
<rect x="327.8" y="716" width="1.2" height="71" fill="#3a8cff" fill-opacity="0.29"/>
<rect x="331.3" y="716" width="1.2" height="71" fill="#3a8cff" fill-opacity="0.30"/>
<rect x="338.5" y="716" width="1.2" height="71" fill="#3a8cff" fill-opacity="0.36"/>
<rect x="345.6" y="716" width="1.2" height="71" fill="#3a8cff" fill-opacity="0.57"/>
<rect x="352.7" y="716" width="1.2" height="71" fill="#3a8cff" fill-opacity="0.40"/>
<rect x="356.3" y="716" width="1.2" height="71" fill="#3a8cff" fill-opacity="0.45"/>
<rect x="359.9" y="716" width="1.2" height="71" fill="#3a8cff" fill-opacity="0.44"/>
<rect x="367.0" y="716" width="1.2" height="71" fill="#3a8cff" fill-opacity="0.71"/>
<rect x="370.6" y="716" width="1.2" height="71" fill="#3a8cff" fill-opacity="0.33"/>
<rect x="374.1" y="716" width="1.2" height="71" fill="#3a8cff" fill-opacity="0.47"/>
<rect x="377.7" y="716" width="1.2" height="71" fill="#3a8cff" fill-opacity="0.38"/>
<rect x="381.3" y="716" width="1.2" height="71" fill="#3a8cff" fill-opacity="0.38"/>
<rect x="388.4" y="716" width="1.2" height="71" fill="#3a8cff" fill-opacity="0.71"/>
<rect x="395.5" y="716" width="1.2" height="71" fill="#3a8cff" fill-opacity="0.51"/>
<rect x="399.1" y="716" width="1.2" height="71" fill="#3a8cff" fill-opacity="0.34"/>
<rect x="402.7" y="716" width="1.2" height="71" fill="#3a8cff" fill-opacity="0.84"/>
<rect x="406.2" y="716" width="1.2" height="71" fill="#3a8cff" fill-opacity="0.43"/>
<rect x="409.8" y="716" width="1.2" height="71" fill="#3a8cff" fill-opacity="0.68"/>
<rect x="413.4" y="716" width="1.2" height="71" fill="#3a8cff" fill-opacity="0.68"/>
<rect x="416.9" y="716" width="1.2" height="71" fill="#3a8cff" fill-opacity="0.44"/>
<rect x="420.5" y="716" width="1.2" height="71" fill="#3a8cff" fill-opacity="0.27"/>
<rect x="424.1" y="716" width="1.2" height="71" fill="#3a8cff" fill-opacity="0.68"/>
<rect x="427.6" y="716" width="1.2" height="71" fill="#3a8cff" fill-opacity="0.26"/>
<rect x="431.2" y="716" width="1.2" height="71" fill="#3a8cff" fill-opacity="0.57"/>
<rect x="434.8" y="716" width="1.2" height="71" fill="#3a8cff" fill-opacity="0.44"/>
<rect x="438.3" y="716" width="1.2" height="71" fill="#3a8cff" fill-opacity="0.35"/>
<rect x="445.5" y="716" width="1.2" height="71" fill="#3a8cff" fill-opacity="0.27"/>
<rect x="449.0" y="716" width="1.2" height="71" fill="#3a8cff" fill-opacity="0.27"/>
<rect x="451.3" y="716" width="1.2" height="71" fill="#3a8cff" fill-opacity="0.28"/>
<rect x="462.3" y="716" width="1.2" height="71" fill="#3a8cff" fill-opacity="0.34"/>
<rect x="465.3" y="716" width="1.2" height="71" fill="#3a8cff" fill-opacity="0.11"/>
<rect x="477.3" y="716" width="1.2" height="71" fill="#3a8cff" fill-opacity="0.23"/>
<rect x="492.3" y="716" width="1.2" height="71" fill="#3a8cff" fill-opacity="0.19"/>
<rect x="497.3" y="716" width="1.2" height="71" fill="#3a8cff" fill-opacity="0.31"/>
<rect x="500.3" y="716" width="1.2" height="71" fill="#3a8cff" fill-opacity="0.23"/>
<rect x="506.3" y="716" width="1.2" height="71" fill="#3a8cff" fill-opacity="0.29"/>
<rect x="525.3" y="716" width="1.2" height="71" fill="#3a8cff" fill-opacity="0.22"/>
<rect x="541.3" y="716" width="1.2" height="71" fill="#3a8cff" fill-opacity="0.29"/>
<rect x="550.3" y="716" width="1.2" height="71" fill="#3a8cff" fill-opacity="0.31"/>
<rect x="571.3" y="716" width="1.2" height="71" fill="#3a8cff" fill-opacity="0.25"/>
<rect x="596.3" y="716" width="1.2" height="71" fill="#3a8cff" fill-opacity="0.11"/>
<rect x="599.3" y="716" width="1.2" height="71" fill="#3a8cff" fill-opacity="0.31"/>
<rect x="606.3" y="716" width="1.2" height="71" fill="#3a8cff" fill-opacity="0.28"/>
<rect x="615.3" y="716" width="1.2" height="71" fill="#3a8cff" fill-opacity="0.10"/>
<rect x="619.3" y="716" width="1.2" height="71" fill="#3a8cff" fill-opacity="0.32"/>
<rect x="623.3" y="716" width="1.2" height="71" fill="#3a8cff" fill-opacity="0.24"/>
<rect x="635.3" y="716" width="1.2" height="71" fill="#3a8cff" fill-opacity="0.16"/>
<rect x="638.3" y="716" width="1.2" height="71" fill="#3a8cff" fill-opacity="0.25"/>
<rect x="641.3" y="716" width="1.2" height="71" fill="#3a8cff" fill-opacity="0.14"/>
<rect x="646.3" y="716" width="1.2" height="71" fill="#3a8cff" fill-opacity="0.21"/>
<rect x="662.3" y="716" width="1.2" height="71" fill="#3a8cff" fill-opacity="0.30"/>
<rect x="74" y="716" width="629" height="71" fill="#3060ff" filter="url(#tx)" opacity="0.35"/>
<rect x="74" y="726.5" width="629" height="27.8" fill="#0a22e6"/>
<linearGradient id="gb_0" x1="0" x2="1" y1="0" y2="0"><stop offset="0" stop-color="#d0f4ff" stop-opacity="1"/><stop offset="0.2" stop-color="#78d8ff" stop-opacity="1"/><stop offset="1" stop-color="#60d0ff" stop-opacity="1"/></linearGradient>
<rect x="73" y="727.0" width="630" height="2.2" fill="url(#gb_0)"/>
<linearGradient id="gb_1" x1="0" x2="1" y1="0" y2="0"><stop offset="0" stop-color="#000030" stop-opacity="1"/><stop offset="1" stop-color="#000050" stop-opacity="0.8"/></linearGradient>
<rect x="73" y="729.6" width="630" height="1.0" fill="url(#gb_1)"/>
<linearGradient id="gb_2" x1="0" x2="1" y1="0" y2="0"><stop offset="0" stop-color="#e0f0e8" stop-opacity="1"/><stop offset="0.2" stop-color="#90e0ff" stop-opacity="1"/><stop offset="1" stop-color="#88dcff" stop-opacity="1"/></linearGradient>
<rect x="73" y="731.0" width="630" height="2.1" fill="url(#gb_2)"/>
<linearGradient id="gb_3" x1="0" x2="1" y1="0" y2="0"><stop offset="0" stop-color="#000030" stop-opacity="1"/><stop offset="1" stop-color="#000050" stop-opacity="0.8"/></linearGradient>
<rect x="73" y="733.6" width="630" height="1.0" fill="url(#gb_3)"/>
<linearGradient id="gb_4" x1="0" x2="1" y1="0" y2="0"><stop offset="0" stop-color="#80ffff" stop-opacity="1"/><stop offset="1" stop-color="#50c8ff" stop-opacity="1"/></linearGradient>
<rect x="73" y="735.0" width="630" height="1.1" fill="url(#gb_4)"/>
<linearGradient id="gb_5" x1="0" x2="1" y1="0" y2="0"><stop offset="0" stop-color="#ffc020" stop-opacity="1"/><stop offset="0.12" stop-color="#d0f050" stop-opacity="1"/><stop offset="0.3" stop-color="#60f0c0" stop-opacity="1"/><stop offset="1" stop-color="#50e8d0" stop-opacity="1"/></linearGradient>
<rect x="73" y="739.3" width="630" height="2.6" fill="url(#gb_5)"/>
<linearGradient id="gb_6" x1="0" x2="1" y1="0" y2="0"><stop offset="0" stop-color="#000030" stop-opacity="1"/><stop offset="1" stop-color="#000050" stop-opacity="0.8"/></linearGradient>
<rect x="73" y="742.4" width="630" height="0.6" fill="url(#gb_6)"/>
<linearGradient id="gb_7" x1="0" x2="1" y1="0" y2="0"><stop offset="0" stop-color="#60e0ff" stop-opacity="1"/><stop offset="1" stop-color="#40c8ff" stop-opacity="1"/></linearGradient>
<rect x="73" y="743.0" width="630" height="0.9" fill="url(#gb_7)"/>
<linearGradient id="gb_8" x1="0" x2="1" y1="0" y2="0"><stop offset="0" stop-color="#e8f0f0" stop-opacity="1"/><stop offset="0.2" stop-color="#78d8ff" stop-opacity="1"/><stop offset="1" stop-color="#60d8ff" stop-opacity="1"/></linearGradient>
<rect x="73" y="747.0" width="630" height="2.0" fill="url(#gb_8)"/>
<linearGradient id="gb_9" x1="0" x2="1" y1="0" y2="0"><stop offset="0" stop-color="#000030" stop-opacity="1"/><stop offset="1" stop-color="#000050" stop-opacity="0.7"/></linearGradient>
<rect x="73" y="749.4" width="630" height="0.9" fill="url(#gb_9)"/>
<linearGradient id="gb_10" x1="0" x2="1" y1="0" y2="0"><stop offset="0" stop-color="#c0f0ff" stop-opacity="1"/><stop offset="0.3" stop-color="#80d8ff" stop-opacity="1"/><stop offset="1" stop-color="#70d0ff" stop-opacity="1"/></linearGradient>
<rect x="73" y="752.7" width="630" height="1.4" fill="url(#gb_10)"/>
<rect x="68" y="716" width="1.5" height="71" fill="#5a3a88"/>
<rect x="69.5" y="716" width="1.5" height="71" fill="#a09ab4"/>
<rect x="71" y="716" width="2" height="71" fill="#44444c"/>
<rect x="73" y="716" width="1" height="71" fill="#90b0d8"/>
<rect x="68" y="726.0" width="5" height="3.0" fill="#c01010"/>
<rect x="68" y="739.0" width="5" height="4.0" fill="#c01010"/>
<rect x="68" y="745.0" width="5" height="3.0" fill="#c01010"/>
</g>
<g font-family="Liberation Sans" font-size="14" fill="#333">
<text transform="translate(53.5,654.5) rotate(-90)" text-anchor="middle">Channel 1</text>
<text transform="translate(53.5,763) rotate(-90)" text-anchor="middle">Channel 2</text>
</g></svg>
</body></html>
